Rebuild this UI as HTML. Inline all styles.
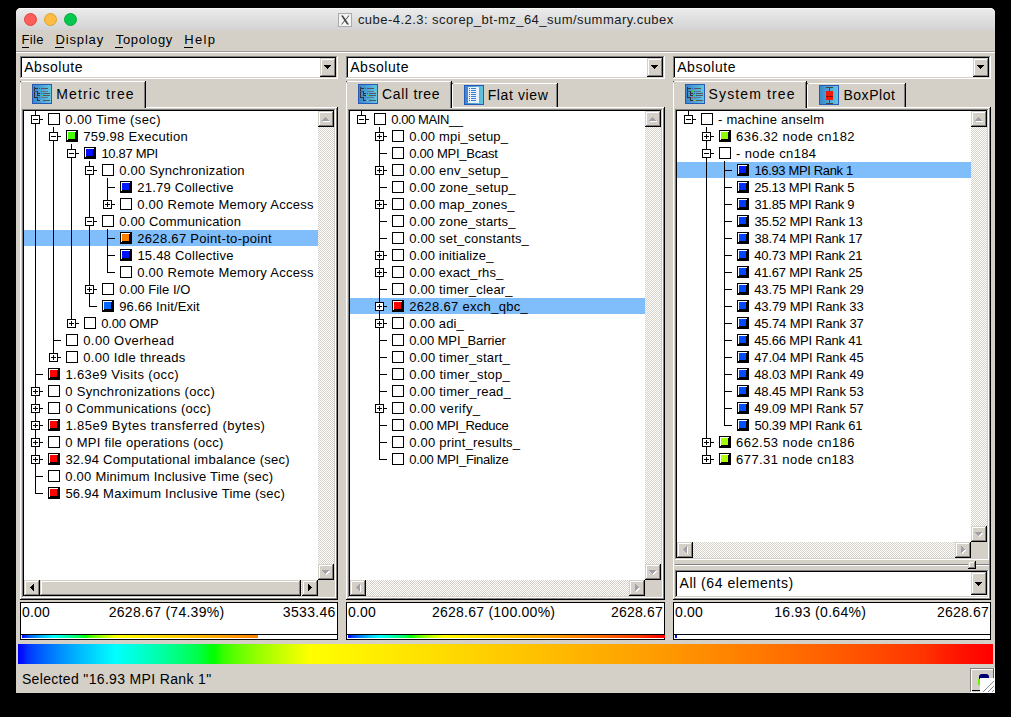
<!DOCTYPE html>
<html><head><meta charset="utf-8"><style>
html,body{margin:0;padding:0;}
body{width:1011px;height:717px;overflow:hidden;background:#000;position:relative;font-family:"Liberation Sans",sans-serif;}
body div{position:absolute;}
.t{white-space:pre;}
#win{left:16px;top:8px;width:979px;height:685px;background:#d4d0c8;border-radius:5px 5px 0 0;}
#title{left:16px;top:8px;width:979px;height:22px;border-radius:5px 5px 0 0;background:linear-gradient(#ececec,#d3d3d3);box-shadow:inset 0 1px 0 #f8f8f8;}
</style></head><body>
<div id="win"></div>
<div id="title"></div>
<div style="left:24px;top:13px;width:11px;height:11px;border-radius:50%;background:#fd5e5a;border:0.5px solid #e5413c;"></div>
<div style="left:44px;top:13px;width:11px;height:11px;border-radius:50%;background:#fdbc43;border:0.5px solid #e2a02b;"></div>
<div style="left:64px;top:13px;width:11px;height:11px;border-radius:50%;background:#05c94e;border:0.5px solid #06a93d;"></div>
<svg style="position:absolute;left:338px;top:13px" width="14" height="14" viewBox="0 0 14 14"><rect x="0.5" y="0.5" width="13" height="13" fill="#f4f4f4" stroke="#aaa"/><path d="M3 2.5 L5 2.5 L11 11.5 L9 11.5 Z" fill="#444"/><path d="M10.5 2.5 L11.5 2.5 L4 11.5 L3 11.5 Z" fill="#444"/></svg>
<div class="t" style="left:357.90px;top:13px;font-size:13px;line-height:13px;letter-spacing:0.456px;color:#1a1a1a;">cube-4.2.3: scorep_bt-mz_64_sum/summary.cubex</div>
<div class="t" style="left:21.60px;top:33px;font-size:13px;line-height:13px;letter-spacing:0.300px;color:#000;">File</div>
<div style="left:22px;top:47px;width:7px;height:1px;background:#000;"></div>
<div class="t" style="left:55.50px;top:33px;font-size:13px;line-height:13px;letter-spacing:0.846px;color:#000;">Display</div>
<div style="left:55px;top:47px;width:9px;height:1px;background:#000;"></div>
<div class="t" style="left:115.85px;top:33px;font-size:13px;line-height:13px;letter-spacing:0.621px;color:#000;">Topology</div>
<div style="left:115px;top:47px;width:8px;height:1px;background:#000;"></div>
<div class="t" style="left:184.30px;top:33px;font-size:13px;line-height:13px;letter-spacing:1.283px;color:#000;">Help</div>
<div style="left:184px;top:47px;width:9px;height:1px;background:#000;"></div>
<div style="left:16px;top:51px;width:979px;height:1px;background:#a09c94;"></div>
<div style="left:16px;top:52px;width:979px;height:1px;background:#fff;"></div>
<div style="left:20px;top:56px;width:318px;height:23px;background:#fff;"></div>
<div style="left:20px;top:56px;width:317px;height:22px;background:#808080;"></div>
<div style="left:21px;top:57px;width:316px;height:21px;background:#d4d0c8;"></div>
<div style="left:21px;top:57px;width:315px;height:20px;background:#000;"></div>
<div style="left:22px;top:58px;width:314px;height:19px;background:#fff;"></div>
<div style="left:320px;top:58px;width:16px;height:19px;background:#000;"></div>
<div style="left:320px;top:58px;width:15px;height:18px;background:#d4d0c8;"></div>
<div style="left:321px;top:59px;width:14px;height:17px;background:#808080;"></div>
<div style="left:321px;top:59px;width:13px;height:16px;background:#fff;"></div>
<div style="left:322px;top:60px;width:12px;height:15px;background:#d4d0c8;"></div>
<div style="left:324px;top:65px;width:7px;height:1px;background:#000;"></div>
<div style="left:325px;top:66px;width:5px;height:1px;background:#000;"></div>
<div style="left:326px;top:67px;width:3px;height:1px;background:#000;"></div>
<div style="left:327px;top:68px;width:1px;height:1px;background:#000;"></div>
<div class="t" style="left:24.20px;top:60px;font-size:14px;line-height:14px;letter-spacing:0.543px;color:#000;">Absolute</div>
<div style="left:20px;top:107px;width:318px;height:493px;background:#000;"></div>
<div style="left:20px;top:107px;width:317px;height:492px;background:#fff;"></div>
<div style="left:21px;top:108px;width:316px;height:491px;background:#808080;"></div>
<div style="left:21px;top:108px;width:315px;height:490px;background:#d4d0c8;"></div>
<div style="left:20px;top:81px;width:126px;height:27px;background:#000;"></div>
<div style="left:20px;top:81px;width:125px;height:27px;background:#fff;border-top-left-radius:2px;"></div>
<div style="left:21px;top:82px;width:124px;height:26px;background:#808080;"></div>
<div style="left:21px;top:82px;width:123px;height:26px;background:#d4d0c8;"></div>
<svg style="position:absolute;left:32px;top:84px" width="20" height="20" viewBox="0 0 20 20" shape-rendering="crispEdges">
<defs><linearGradient id="ig32" x1="0" x2="1" y1="0" y2="0"><stop offset="0" stop-color="#3a86cc"/><stop offset="1" stop-color="#62c6de"/></linearGradient></defs>
<rect x="0" y="0" width="20" height="20" fill="#2a58b8"/><rect x="1" y="1" width="18" height="18" fill="url(#ig32)"/>
<rect x="2" y="3" width="1" height="11" fill="#333"/><rect x="2" y="4" width="4" height="1" fill="#333"/>
<rect x="2" y="7" width="4" height="1" fill="#3a5a78"/><rect x="5" y="7" width="1" height="5" fill="#333"/>
<rect x="5" y="9" width="3" height="1" fill="#333"/><rect x="5" y="11" width="3" height="1" fill="#333"/>
<rect x="2" y="13" width="4" height="1" fill="#333"/><rect x="5" y="13" width="1" height="4" fill="#333"/><rect x="5" y="16" width="3" height="1" fill="#333"/>
<rect x="7" y="4" width="1" height="1" fill="#3050e0"/><rect x="7" y="6" width="1" height="2" fill="#30d040"/>
<rect x="9" y="9" width="1" height="1" fill="#3050e0"/><rect x="9" y="11" width="2" height="1" fill="#20e030"/>
<rect x="7" y="13" width="1" height="1" fill="#c03040"/><rect x="9" y="16" width="1" height="1" fill="#d0c040"/>
<rect x="9" y="4" width="7" height="1" fill="#556"/><rect x="9" y="7" width="7" height="1" fill="#5a7a90"/>
<rect x="11" y="9" width="7" height="1" fill="#556"/><rect x="11" y="11" width="7" height="1" fill="#556"/>
<rect x="9" y="13" width="7" height="1" fill="#5a7a90"/><rect x="11" y="16" width="7" height="1" fill="#556"/>
</svg>
<div class="t" style="left:56.27px;top:87px;font-size:14px;line-height:14px;letter-spacing:1.120px;color:#000;">Metric tree</div>
<div style="left:22px;top:109px;width:314px;height:489px;background:#fff;"></div>
<div style="left:22px;top:109px;width:313px;height:488px;background:#808080;"></div>
<div style="left:23px;top:110px;width:312px;height:487px;background:#d4d0c8;"></div>
<div style="left:23px;top:110px;width:311px;height:486px;background:#000;"></div>
<div style="left:24px;top:111px;width:310px;height:485px;background:#fff;"></div>
<div style="left:318px;top:111px;width:16px;height:469px;background:#fff;background-image:repeating-conic-gradient(#d4d0c8 0 25%,#fff 0 50%);background-size:2px 2px;"></div>
<div style="left:318px;top:111px;width:16px;height:16px;background:#000;"></div>
<div style="left:318px;top:111px;width:15px;height:15px;background:#d4d0c8;"></div>
<div style="left:319px;top:112px;width:14px;height:14px;background:#808080;"></div>
<div style="left:319px;top:112px;width:13px;height:13px;background:#fff;"></div>
<div style="left:320px;top:113px;width:12px;height:12px;background:#d4d0c8;"></div>
<div style="left:318px;top:564px;width:16px;height:16px;background:#000;"></div>
<div style="left:318px;top:564px;width:15px;height:15px;background:#d4d0c8;"></div>
<div style="left:319px;top:565px;width:14px;height:14px;background:#808080;"></div>
<div style="left:319px;top:565px;width:13px;height:13px;background:#fff;"></div>
<div style="left:320px;top:566px;width:12px;height:12px;background:#d4d0c8;"></div>
<div style="left:326px;top:118px;width:1px;height:1px;background:#fff;"></div>
<div style="left:325px;top:119px;width:3px;height:1px;background:#fff;"></div>
<div style="left:324px;top:120px;width:5px;height:1px;background:#fff;"></div>
<div style="left:323px;top:121px;width:7px;height:1px;background:#fff;"></div>
<div style="left:325px;top:117px;width:1px;height:1px;background:#a0a0a8;"></div>
<div style="left:324px;top:118px;width:3px;height:1px;background:#a0a0a8;"></div>
<div style="left:323px;top:119px;width:5px;height:1px;background:#a0a0a8;"></div>
<div style="left:322px;top:120px;width:7px;height:1px;background:#a0a0a8;"></div>
<div style="left:323px;top:571px;width:7px;height:1px;background:#fff;"></div>
<div style="left:324px;top:572px;width:5px;height:1px;background:#fff;"></div>
<div style="left:325px;top:573px;width:3px;height:1px;background:#fff;"></div>
<div style="left:326px;top:574px;width:1px;height:1px;background:#fff;"></div>
<div style="left:322px;top:570px;width:7px;height:1px;background:#a0a0a8;"></div>
<div style="left:323px;top:571px;width:5px;height:1px;background:#a0a0a8;"></div>
<div style="left:324px;top:572px;width:3px;height:1px;background:#a0a0a8;"></div>
<div style="left:325px;top:573px;width:1px;height:1px;background:#a0a0a8;"></div>
<div style="left:318px;top:580px;width:16px;height:16px;background:#d4d0c8;"></div>
<div style="left:24px;top:580px;width:294px;height:16px;background:#fff;background-image:repeating-conic-gradient(#d4d0c8 0 25%,#fff 0 50%);background-size:2px 2px;"></div>
<div style="left:24px;top:580px;width:16px;height:16px;background:#000;"></div>
<div style="left:24px;top:580px;width:15px;height:15px;background:#d4d0c8;"></div>
<div style="left:25px;top:581px;width:14px;height:14px;background:#808080;"></div>
<div style="left:25px;top:581px;width:13px;height:13px;background:#fff;"></div>
<div style="left:26px;top:582px;width:12px;height:12px;background:#d4d0c8;"></div>
<div style="left:302px;top:580px;width:16px;height:16px;background:#000;"></div>
<div style="left:302px;top:580px;width:15px;height:15px;background:#d4d0c8;"></div>
<div style="left:303px;top:581px;width:14px;height:14px;background:#808080;"></div>
<div style="left:303px;top:581px;width:13px;height:13px;background:#fff;"></div>
<div style="left:304px;top:582px;width:12px;height:12px;background:#d4d0c8;"></div>
<div style="left:30px;top:587px;width:1px;height:1px;background:#000;"></div>
<div style="left:31px;top:586px;width:1px;height:3px;background:#000;"></div>
<div style="left:32px;top:585px;width:1px;height:5px;background:#000;"></div>
<div style="left:33px;top:584px;width:1px;height:7px;background:#000;"></div>
<div style="left:308px;top:584px;width:1px;height:7px;background:#000;"></div>
<div style="left:309px;top:585px;width:1px;height:5px;background:#000;"></div>
<div style="left:310px;top:586px;width:1px;height:3px;background:#000;"></div>
<div style="left:311px;top:587px;width:1px;height:1px;background:#000;"></div>
<div style="left:40px;top:580px;width:261px;height:16px;background:#000;"></div>
<div style="left:40px;top:580px;width:260px;height:15px;background:#d4d0c8;"></div>
<div style="left:41px;top:581px;width:259px;height:14px;background:#808080;"></div>
<div style="left:41px;top:581px;width:258px;height:13px;background:#fff;"></div>
<div style="left:42px;top:582px;width:257px;height:12px;background:#d4d0c8;"></div>
<div style="left:35px;top:110px;width:1px;height:10px;background:#000;"></div>
<div style="left:35px;top:119px;width:1px;height:9px;background:#000;"></div>
<div style="left:35px;top:119px;width:8px;height:1px;background:#000;"></div>
<div style="left:31px;top:115px;width:9px;height:9px;background:#000;"></div>
<div style="left:32px;top:116px;width:7px;height:7px;background:#fff;"></div>
<div style="left:33px;top:119px;width:5px;height:1px;background:#000;"></div>
<div style="left:48px;top:113px;width:12px;height:12px;background:#000;"></div>
<div style="left:49px;top:114px;width:10px;height:10px;background:#fff;"></div>
<div class="t" style="left:65.25px;top:113px;font-size:13px;line-height:13px;letter-spacing:0.413px;color:#000;">0.00 Time (sec)</div>
<div style="left:35px;top:128px;width:1px;height:17px;background:#000;"></div>
<div style="left:53px;top:127px;width:1px;height:10px;background:#000;"></div>
<div style="left:53px;top:136px;width:1px;height:9px;background:#000;"></div>
<div style="left:53px;top:136px;width:8px;height:1px;background:#000;"></div>
<div style="left:49px;top:132px;width:9px;height:9px;background:#000;"></div>
<div style="left:50px;top:133px;width:7px;height:7px;background:#fff;"></div>
<div style="left:51px;top:136px;width:5px;height:1px;background:#000;"></div>
<div style="left:66px;top:130px;width:12px;height:12px;background:#000;"></div>
<div style="left:67px;top:131px;width:9px;height:1px;background:#fff;"></div>
<div style="left:67px;top:131px;width:1px;height:9px;background:#fff;"></div>
<div style="left:68px;top:132px;width:7px;height:7px;background:#44ff00;"></div>
<div class="t" style="left:83.25px;top:130px;font-size:13px;line-height:13px;letter-spacing:0.267px;color:#000;">759.98 Execution</div>
<div style="left:35px;top:145px;width:1px;height:17px;background:#000;"></div>
<div style="left:53px;top:145px;width:1px;height:17px;background:#000;"></div>
<div style="left:71px;top:144px;width:1px;height:10px;background:#000;"></div>
<div style="left:71px;top:153px;width:1px;height:9px;background:#000;"></div>
<div style="left:71px;top:153px;width:8px;height:1px;background:#000;"></div>
<div style="left:67px;top:149px;width:9px;height:9px;background:#000;"></div>
<div style="left:68px;top:150px;width:7px;height:7px;background:#fff;"></div>
<div style="left:69px;top:153px;width:5px;height:1px;background:#000;"></div>
<div style="left:84px;top:147px;width:12px;height:12px;background:#000;"></div>
<div style="left:85px;top:148px;width:9px;height:1px;background:#fff;"></div>
<div style="left:85px;top:148px;width:1px;height:9px;background:#fff;"></div>
<div style="left:86px;top:149px;width:7px;height:7px;background:#000bff;"></div>
<div class="t" style="left:101.38px;top:147px;font-size:13px;line-height:13px;letter-spacing:-0.300px;color:#000;">10.87 MPI</div>
<div style="left:35px;top:162px;width:1px;height:17px;background:#000;"></div>
<div style="left:53px;top:162px;width:1px;height:17px;background:#000;"></div>
<div style="left:71px;top:162px;width:1px;height:17px;background:#000;"></div>
<div style="left:89px;top:161px;width:1px;height:10px;background:#000;"></div>
<div style="left:89px;top:170px;width:1px;height:9px;background:#000;"></div>
<div style="left:89px;top:170px;width:8px;height:1px;background:#000;"></div>
<div style="left:85px;top:166px;width:9px;height:9px;background:#000;"></div>
<div style="left:86px;top:167px;width:7px;height:7px;background:#fff;"></div>
<div style="left:87px;top:170px;width:5px;height:1px;background:#000;"></div>
<div style="left:102px;top:164px;width:12px;height:12px;background:#000;"></div>
<div style="left:103px;top:165px;width:10px;height:10px;background:#fff;"></div>
<div class="t" style="left:119.25px;top:164px;font-size:13px;line-height:13px;letter-spacing:0.205px;color:#000;">0.00 Synchronization</div>
<div style="left:35px;top:179px;width:1px;height:17px;background:#000;"></div>
<div style="left:53px;top:179px;width:1px;height:17px;background:#000;"></div>
<div style="left:71px;top:179px;width:1px;height:17px;background:#000;"></div>
<div style="left:89px;top:179px;width:1px;height:17px;background:#000;"></div>
<div style="left:107px;top:178px;width:1px;height:10px;background:#000;"></div>
<div style="left:107px;top:187px;width:1px;height:9px;background:#000;"></div>
<div style="left:107px;top:187px;width:8px;height:1px;background:#000;"></div>
<div style="left:120px;top:181px;width:12px;height:12px;background:#000;"></div>
<div style="left:121px;top:182px;width:9px;height:1px;background:#fff;"></div>
<div style="left:121px;top:182px;width:1px;height:9px;background:#fff;"></div>
<div style="left:122px;top:183px;width:7px;height:7px;background:#001bff;"></div>
<div class="t" style="left:137.25px;top:181px;font-size:13px;line-height:13px;letter-spacing:0.243px;color:#000;">21.79 Collective</div>
<div style="left:35px;top:196px;width:1px;height:17px;background:#000;"></div>
<div style="left:53px;top:196px;width:1px;height:17px;background:#000;"></div>
<div style="left:71px;top:196px;width:1px;height:17px;background:#000;"></div>
<div style="left:89px;top:196px;width:1px;height:17px;background:#000;"></div>
<div style="left:107px;top:195px;width:1px;height:10px;background:#000;"></div>
<div style="left:107px;top:204px;width:8px;height:1px;background:#000;"></div>
<div style="left:103px;top:200px;width:9px;height:9px;background:#000;"></div>
<div style="left:104px;top:201px;width:7px;height:7px;background:#fff;"></div>
<div style="left:105px;top:204px;width:5px;height:1px;background:#000;"></div>
<div style="left:107px;top:202px;width:1px;height:5px;background:#000;"></div>
<div style="left:120px;top:198px;width:12px;height:12px;background:#000;"></div>
<div style="left:121px;top:199px;width:10px;height:10px;background:#fff;"></div>
<div class="t" style="left:137.25px;top:198px;font-size:13px;line-height:13px;letter-spacing:0.266px;color:#000;">0.00 Remote Memory Access</div>
<div style="left:35px;top:213px;width:1px;height:17px;background:#000;"></div>
<div style="left:53px;top:213px;width:1px;height:17px;background:#000;"></div>
<div style="left:71px;top:213px;width:1px;height:17px;background:#000;"></div>
<div style="left:89px;top:212px;width:1px;height:10px;background:#000;"></div>
<div style="left:89px;top:221px;width:1px;height:9px;background:#000;"></div>
<div style="left:89px;top:221px;width:8px;height:1px;background:#000;"></div>
<div style="left:85px;top:217px;width:9px;height:9px;background:#000;"></div>
<div style="left:86px;top:218px;width:7px;height:7px;background:#fff;"></div>
<div style="left:87px;top:221px;width:5px;height:1px;background:#000;"></div>
<div style="left:102px;top:215px;width:12px;height:12px;background:#000;"></div>
<div style="left:103px;top:216px;width:10px;height:10px;background:#fff;"></div>
<div class="t" style="left:119.25px;top:215px;font-size:13px;line-height:13px;letter-spacing:0.144px;color:#000;">0.00 Communication</div>
<div style="left:24px;top:230px;width:294px;height:16px;background:#80bdfb;"></div>
<div style="left:35px;top:230px;width:1px;height:17px;background:#000;"></div>
<div style="left:53px;top:230px;width:1px;height:17px;background:#000;"></div>
<div style="left:71px;top:230px;width:1px;height:17px;background:#000;"></div>
<div style="left:89px;top:230px;width:1px;height:17px;background:#000;"></div>
<div style="left:107px;top:229px;width:1px;height:10px;background:#000;"></div>
<div style="left:107px;top:238px;width:1px;height:9px;background:#000;"></div>
<div style="left:107px;top:238px;width:8px;height:1px;background:#000;"></div>
<div style="left:120px;top:232px;width:12px;height:12px;background:#000;"></div>
<div style="left:121px;top:233px;width:9px;height:1px;background:#fff;"></div>
<div style="left:121px;top:233px;width:1px;height:9px;background:#fff;"></div>
<div style="left:122px;top:234px;width:7px;height:7px;background:#ff7e00;"></div>
<div class="t" style="left:137.25px;top:232px;font-size:13px;line-height:13px;letter-spacing:0.312px;color:#000;">2628.67 Point-to-point</div>
<div style="left:35px;top:247px;width:1px;height:17px;background:#000;"></div>
<div style="left:53px;top:247px;width:1px;height:17px;background:#000;"></div>
<div style="left:71px;top:247px;width:1px;height:17px;background:#000;"></div>
<div style="left:89px;top:247px;width:1px;height:17px;background:#000;"></div>
<div style="left:107px;top:246px;width:1px;height:10px;background:#000;"></div>
<div style="left:107px;top:255px;width:1px;height:9px;background:#000;"></div>
<div style="left:107px;top:255px;width:8px;height:1px;background:#000;"></div>
<div style="left:120px;top:249px;width:12px;height:12px;background:#000;"></div>
<div style="left:121px;top:250px;width:9px;height:1px;background:#fff;"></div>
<div style="left:121px;top:250px;width:1px;height:9px;background:#fff;"></div>
<div style="left:122px;top:251px;width:7px;height:7px;background:#0011ff;"></div>
<div class="t" style="left:137.38px;top:249px;font-size:13px;line-height:13px;letter-spacing:0.235px;color:#000;">15.48 Collective</div>
<div style="left:35px;top:264px;width:1px;height:17px;background:#000;"></div>
<div style="left:53px;top:264px;width:1px;height:17px;background:#000;"></div>
<div style="left:71px;top:264px;width:1px;height:17px;background:#000;"></div>
<div style="left:89px;top:264px;width:1px;height:17px;background:#000;"></div>
<div style="left:107px;top:263px;width:1px;height:10px;background:#000;"></div>
<div style="left:107px;top:272px;width:8px;height:1px;background:#000;"></div>
<div style="left:120px;top:266px;width:12px;height:12px;background:#000;"></div>
<div style="left:121px;top:267px;width:10px;height:10px;background:#fff;"></div>
<div class="t" style="left:137.25px;top:266px;font-size:13px;line-height:13px;letter-spacing:0.266px;color:#000;">0.00 Remote Memory Access</div>
<div style="left:35px;top:281px;width:1px;height:17px;background:#000;"></div>
<div style="left:53px;top:281px;width:1px;height:17px;background:#000;"></div>
<div style="left:71px;top:281px;width:1px;height:17px;background:#000;"></div>
<div style="left:89px;top:280px;width:1px;height:10px;background:#000;"></div>
<div style="left:89px;top:289px;width:1px;height:9px;background:#000;"></div>
<div style="left:89px;top:289px;width:8px;height:1px;background:#000;"></div>
<div style="left:85px;top:285px;width:9px;height:9px;background:#000;"></div>
<div style="left:86px;top:286px;width:7px;height:7px;background:#fff;"></div>
<div style="left:87px;top:289px;width:5px;height:1px;background:#000;"></div>
<div style="left:89px;top:287px;width:1px;height:5px;background:#000;"></div>
<div style="left:102px;top:283px;width:12px;height:12px;background:#000;"></div>
<div style="left:103px;top:284px;width:10px;height:10px;background:#fff;"></div>
<div class="t" style="left:119.25px;top:283px;font-size:13px;line-height:13px;letter-spacing:0.017px;color:#000;">0.00 File I/O</div>
<div style="left:35px;top:298px;width:1px;height:17px;background:#000;"></div>
<div style="left:53px;top:298px;width:1px;height:17px;background:#000;"></div>
<div style="left:71px;top:298px;width:1px;height:17px;background:#000;"></div>
<div style="left:89px;top:297px;width:1px;height:10px;background:#000;"></div>
<div style="left:89px;top:306px;width:8px;height:1px;background:#000;"></div>
<div style="left:102px;top:300px;width:12px;height:12px;background:#000;"></div>
<div style="left:103px;top:301px;width:9px;height:1px;background:#fff;"></div>
<div style="left:103px;top:301px;width:1px;height:9px;background:#fff;"></div>
<div style="left:104px;top:302px;width:7px;height:7px;background:#0067ff;"></div>
<div class="t" style="left:119.25px;top:300px;font-size:13px;line-height:13px;letter-spacing:0.121px;color:#000;">96.66 Init/Exit</div>
<div style="left:35px;top:315px;width:1px;height:17px;background:#000;"></div>
<div style="left:53px;top:315px;width:1px;height:17px;background:#000;"></div>
<div style="left:71px;top:314px;width:1px;height:10px;background:#000;"></div>
<div style="left:71px;top:323px;width:8px;height:1px;background:#000;"></div>
<div style="left:67px;top:319px;width:9px;height:9px;background:#000;"></div>
<div style="left:68px;top:320px;width:7px;height:7px;background:#fff;"></div>
<div style="left:69px;top:323px;width:5px;height:1px;background:#000;"></div>
<div style="left:71px;top:321px;width:1px;height:5px;background:#000;"></div>
<div style="left:84px;top:317px;width:12px;height:12px;background:#000;"></div>
<div style="left:85px;top:318px;width:10px;height:10px;background:#fff;"></div>
<div class="t" style="left:101.25px;top:317px;font-size:13px;line-height:13px;letter-spacing:-0.161px;color:#000;">0.00 OMP</div>
<div style="left:35px;top:332px;width:1px;height:17px;background:#000;"></div>
<div style="left:53px;top:331px;width:1px;height:10px;background:#000;"></div>
<div style="left:53px;top:340px;width:1px;height:9px;background:#000;"></div>
<div style="left:53px;top:340px;width:8px;height:1px;background:#000;"></div>
<div style="left:66px;top:334px;width:12px;height:12px;background:#000;"></div>
<div style="left:67px;top:335px;width:10px;height:10px;background:#fff;"></div>
<div class="t" style="left:83.25px;top:334px;font-size:13px;line-height:13px;letter-spacing:0.392px;color:#000;">0.00 Overhead</div>
<div style="left:35px;top:349px;width:1px;height:17px;background:#000;"></div>
<div style="left:53px;top:348px;width:1px;height:10px;background:#000;"></div>
<div style="left:53px;top:357px;width:8px;height:1px;background:#000;"></div>
<div style="left:49px;top:353px;width:9px;height:9px;background:#000;"></div>
<div style="left:50px;top:354px;width:7px;height:7px;background:#fff;"></div>
<div style="left:51px;top:357px;width:5px;height:1px;background:#000;"></div>
<div style="left:53px;top:355px;width:1px;height:5px;background:#000;"></div>
<div style="left:66px;top:351px;width:12px;height:12px;background:#000;"></div>
<div style="left:67px;top:352px;width:10px;height:10px;background:#fff;"></div>
<div class="t" style="left:83.25px;top:351px;font-size:13px;line-height:13px;letter-spacing:0.328px;color:#000;">0.00 Idle threads</div>
<div style="left:35px;top:365px;width:1px;height:10px;background:#000;"></div>
<div style="left:35px;top:374px;width:1px;height:9px;background:#000;"></div>
<div style="left:35px;top:374px;width:8px;height:1px;background:#000;"></div>
<div style="left:48px;top:368px;width:12px;height:12px;background:#000;"></div>
<div style="left:49px;top:369px;width:9px;height:1px;background:#fff;"></div>
<div style="left:49px;top:369px;width:1px;height:9px;background:#fff;"></div>
<div style="left:50px;top:370px;width:7px;height:7px;background:#ff0000;"></div>
<div class="t" style="left:65.38px;top:368px;font-size:13px;line-height:13px;letter-spacing:0.363px;color:#000;">1.63e9 Visits (occ)</div>
<div style="left:35px;top:382px;width:1px;height:10px;background:#000;"></div>
<div style="left:35px;top:391px;width:1px;height:9px;background:#000;"></div>
<div style="left:35px;top:391px;width:8px;height:1px;background:#000;"></div>
<div style="left:31px;top:387px;width:9px;height:9px;background:#000;"></div>
<div style="left:32px;top:388px;width:7px;height:7px;background:#fff;"></div>
<div style="left:33px;top:391px;width:5px;height:1px;background:#000;"></div>
<div style="left:35px;top:389px;width:1px;height:5px;background:#000;"></div>
<div style="left:48px;top:385px;width:12px;height:12px;background:#000;"></div>
<div style="left:49px;top:386px;width:10px;height:10px;background:#fff;"></div>
<div class="t" style="left:65.25px;top:385px;font-size:13px;line-height:13px;letter-spacing:0.310px;color:#000;">0 Synchronizations (occ)</div>
<div style="left:35px;top:399px;width:1px;height:10px;background:#000;"></div>
<div style="left:35px;top:408px;width:1px;height:9px;background:#000;"></div>
<div style="left:35px;top:408px;width:8px;height:1px;background:#000;"></div>
<div style="left:31px;top:404px;width:9px;height:9px;background:#000;"></div>
<div style="left:32px;top:405px;width:7px;height:7px;background:#fff;"></div>
<div style="left:33px;top:408px;width:5px;height:1px;background:#000;"></div>
<div style="left:35px;top:406px;width:1px;height:5px;background:#000;"></div>
<div style="left:48px;top:402px;width:12px;height:12px;background:#000;"></div>
<div style="left:49px;top:403px;width:10px;height:10px;background:#fff;"></div>
<div class="t" style="left:65.25px;top:402px;font-size:13px;line-height:13px;letter-spacing:0.260px;color:#000;">0 Communications (occ)</div>
<div style="left:35px;top:416px;width:1px;height:10px;background:#000;"></div>
<div style="left:35px;top:425px;width:1px;height:9px;background:#000;"></div>
<div style="left:35px;top:425px;width:8px;height:1px;background:#000;"></div>
<div style="left:31px;top:421px;width:9px;height:9px;background:#000;"></div>
<div style="left:32px;top:422px;width:7px;height:7px;background:#fff;"></div>
<div style="left:33px;top:425px;width:5px;height:1px;background:#000;"></div>
<div style="left:35px;top:423px;width:1px;height:5px;background:#000;"></div>
<div style="left:48px;top:419px;width:12px;height:12px;background:#000;"></div>
<div style="left:49px;top:420px;width:9px;height:1px;background:#fff;"></div>
<div style="left:49px;top:420px;width:1px;height:9px;background:#fff;"></div>
<div style="left:50px;top:421px;width:7px;height:7px;background:#ff0000;"></div>
<div class="t" style="left:65.38px;top:419px;font-size:13px;line-height:13px;letter-spacing:0.446px;color:#000;">1.85e9 Bytes transferred (bytes)</div>
<div style="left:35px;top:433px;width:1px;height:10px;background:#000;"></div>
<div style="left:35px;top:442px;width:1px;height:9px;background:#000;"></div>
<div style="left:35px;top:442px;width:8px;height:1px;background:#000;"></div>
<div style="left:31px;top:438px;width:9px;height:9px;background:#000;"></div>
<div style="left:32px;top:439px;width:7px;height:7px;background:#fff;"></div>
<div style="left:33px;top:442px;width:5px;height:1px;background:#000;"></div>
<div style="left:35px;top:440px;width:1px;height:5px;background:#000;"></div>
<div style="left:48px;top:436px;width:12px;height:12px;background:#000;"></div>
<div style="left:49px;top:437px;width:10px;height:10px;background:#fff;"></div>
<div class="t" style="left:65.25px;top:436px;font-size:13px;line-height:13px;letter-spacing:0.269px;color:#000;">0 MPI file operations (occ)</div>
<div style="left:35px;top:450px;width:1px;height:10px;background:#000;"></div>
<div style="left:35px;top:459px;width:1px;height:9px;background:#000;"></div>
<div style="left:35px;top:459px;width:8px;height:1px;background:#000;"></div>
<div style="left:31px;top:455px;width:9px;height:9px;background:#000;"></div>
<div style="left:32px;top:456px;width:7px;height:7px;background:#fff;"></div>
<div style="left:33px;top:459px;width:5px;height:1px;background:#000;"></div>
<div style="left:35px;top:457px;width:1px;height:5px;background:#000;"></div>
<div style="left:48px;top:453px;width:12px;height:12px;background:#000;"></div>
<div style="left:49px;top:454px;width:9px;height:1px;background:#fff;"></div>
<div style="left:49px;top:454px;width:1px;height:9px;background:#fff;"></div>
<div style="left:50px;top:455px;width:7px;height:7px;background:#ff0000;"></div>
<div class="t" style="left:65.38px;top:453px;font-size:13px;line-height:13px;letter-spacing:0.262px;color:#000;">32.94 Computational imbalance (sec)</div>
<div style="left:35px;top:467px;width:1px;height:10px;background:#000;"></div>
<div style="left:35px;top:476px;width:1px;height:9px;background:#000;"></div>
<div style="left:35px;top:476px;width:8px;height:1px;background:#000;"></div>
<div style="left:48px;top:470px;width:12px;height:12px;background:#000;"></div>
<div style="left:49px;top:471px;width:10px;height:10px;background:#fff;"></div>
<div class="t" style="left:65.25px;top:470px;font-size:13px;line-height:13px;letter-spacing:0.243px;color:#000;">0.00 Minimum Inclusive Time (sec)</div>
<div style="left:35px;top:484px;width:1px;height:10px;background:#000;"></div>
<div style="left:35px;top:493px;width:8px;height:1px;background:#000;"></div>
<div style="left:48px;top:487px;width:12px;height:12px;background:#000;"></div>
<div style="left:49px;top:488px;width:9px;height:1px;background:#fff;"></div>
<div style="left:49px;top:488px;width:1px;height:9px;background:#fff;"></div>
<div style="left:50px;top:489px;width:7px;height:7px;background:#ff0000;"></div>
<div class="t" style="left:65.38px;top:487px;font-size:13px;line-height:13px;letter-spacing:0.260px;color:#000;">56.94 Maximum Inclusive Time (sec)</div>
<div style="left:20px;top:602px;width:318px;height:38px;background:#000;"></div>
<div style="left:21px;top:603px;width:316px;height:36px;background:#fff;"></div>
<div style="left:21px;top:634px;width:316px;height:1px;background:#000;"></div>
<div style="left:22px;top:635px;width:236px;height:3px;background:#fff;background:linear-gradient(to right,#0000ff 0.00%,#0014ff 0.50%,#0033ff 1.00%,#0044ff 1.50%,#0053ff 2.00%,#0061ff 2.50%,#006eff 3.00%,#007aff 3.50%,#0086ff 4.00%,#0092ff 4.50%,#009dff 5.00%,#00a8ff 5.50%,#00b2ff 6.00%,#00bdff 6.50%,#00c7ff 7.00%,#00d0ff 7.50%,#00daff 8.00%,#00e4ff 8.50%,#00edff 9.00%,#00f6ff 9.50%,#00ffff 10.00%,#00fff6 10.50%,#00ffed 11.00%,#00ffe4 11.50%,#00ffda 12.00%,#00ffd0 12.50%,#00ffc7 13.00%,#00ffbd 13.50%,#00ffb2 14.00%,#00ffa8 14.50%,#00ff9d 15.00%,#00ff92 15.50%,#00ff86 16.00%,#00ff7a 16.50%,#00ff6e 17.00%,#00ff61 17.50%,#00ff53 18.00%,#00ff44 18.50%,#00ff33 19.00%,#00ff14 19.50%,#00ff00 20.00%,#14ff00 20.50%,#33ff00 21.00%,#44ff00 21.50%,#53ff00 22.00%,#61ff00 22.50%,#6eff00 23.00%,#7aff00 23.50%,#86ff00 24.00%,#92ff00 24.50%,#9dff00 25.00%,#a8ff00 25.50%,#b2ff00 26.00%,#bdff00 26.50%,#c7ff00 27.00%,#d0ff00 27.50%,#daff00 28.00%,#e4ff00 28.50%,#edff00 29.00%,#f6ff00 29.50%,#ffff00 30.00%,#fffc00 31.00%,#fffa00 32.00%,#fff700 33.00%,#fff500 34.00%,#fff200 35.00%,#ffef00 36.00%,#ffed00 37.00%,#ffea00 38.00%,#ffe800 39.00%,#ffe500 40.00%,#ffe200 41.00%,#ffe000 42.00%,#ffdd00 43.00%,#ffda00 44.00%,#ffd700 45.00%,#ffd500 46.00%,#ffd200 47.00%,#ffcf00 48.00%,#ffcc00 49.00%,#ffc900 50.00%,#ffc700 51.00%,#ffc400 52.00%,#ffc100 53.00%,#ffbe00 54.00%,#ffbb00 55.00%,#ffb800 56.00%,#ffb500 57.00%,#ffb200 58.00%,#ffaf00 59.00%,#ffac00 60.00%,#ffa900 61.00%,#ffa600 62.00%,#ffa300 63.00%,#ffa000 64.00%,#ff9d00 65.00%,#ff9a00 66.00%,#ff9700 67.00%,#ff9300 68.00%,#ff9000 69.00%,#ff8d00 70.00%,#ff8a00 71.00%,#ff8600 72.00%,#ff8300 73.00%,#ff7f00 74.00%,#ff7c00 75.00%,#ff7900 76.00%,#ff7500 77.00%,#ff7100 78.00%,#ff6e00 79.00%,#ff6a00 80.00%,#ff6600 81.00%,#ff6300 82.00%,#ff5f00 83.00%,#ff5b00 84.00%,#ff5700 85.00%,#ff5300 86.00%,#ff4e00 87.00%,#ff4a00 88.00%,#ff4600 89.00%,#ff4100 90.00%,#ff3d00 91.00%,#ff3800 92.00%,#ff3300 93.00%,#ff2900 94.00%,#ff2000 95.00%,#ff1800 96.00%,#ff1100 97.00%,#ff0a00 98.00%,#ff0500 99.00%,#ff0000 100.00%);background-size:317px 3px;"></div>
<div class="t" style="left:22.00px;top:605px;font-size:14px;line-height:14px;letter-spacing:0.150px;color:#000;">0.00</div>
<div class="t" style="left:108.78px;top:605px;font-size:14px;line-height:14px;letter-spacing:0.268px;color:#000;">2628.67 (74.39%)</div>
<div class="t" style="left:282.80px;top:605px;font-size:14px;line-height:14px;letter-spacing:0.329px;color:#000;">3533.46</div>
<div style="left:346px;top:56px;width:319px;height:23px;background:#fff;"></div>
<div style="left:346px;top:56px;width:318px;height:22px;background:#808080;"></div>
<div style="left:347px;top:57px;width:317px;height:21px;background:#d4d0c8;"></div>
<div style="left:347px;top:57px;width:316px;height:20px;background:#000;"></div>
<div style="left:348px;top:58px;width:315px;height:19px;background:#fff;"></div>
<div style="left:647px;top:58px;width:16px;height:19px;background:#000;"></div>
<div style="left:647px;top:58px;width:15px;height:18px;background:#d4d0c8;"></div>
<div style="left:648px;top:59px;width:14px;height:17px;background:#808080;"></div>
<div style="left:648px;top:59px;width:13px;height:16px;background:#fff;"></div>
<div style="left:649px;top:60px;width:12px;height:15px;background:#d4d0c8;"></div>
<div style="left:651px;top:65px;width:7px;height:1px;background:#000;"></div>
<div style="left:652px;top:66px;width:5px;height:1px;background:#000;"></div>
<div style="left:653px;top:67px;width:3px;height:1px;background:#000;"></div>
<div style="left:654px;top:68px;width:1px;height:1px;background:#000;"></div>
<div class="t" style="left:350.20px;top:60px;font-size:14px;line-height:14px;letter-spacing:0.543px;color:#000;">Absolute</div>
<div style="left:346px;top:107px;width:319px;height:493px;background:#000;"></div>
<div style="left:346px;top:107px;width:318px;height:492px;background:#fff;"></div>
<div style="left:347px;top:108px;width:317px;height:491px;background:#808080;"></div>
<div style="left:347px;top:108px;width:316px;height:490px;background:#d4d0c8;"></div>
<div style="left:346px;top:81px;width:106px;height:27px;background:#000;"></div>
<div style="left:346px;top:81px;width:105px;height:27px;background:#fff;border-top-left-radius:2px;"></div>
<div style="left:347px;top:82px;width:104px;height:26px;background:#808080;"></div>
<div style="left:347px;top:82px;width:103px;height:26px;background:#d4d0c8;"></div>
<svg style="position:absolute;left:358px;top:84px" width="20" height="20" viewBox="0 0 20 20" shape-rendering="crispEdges">
<defs><linearGradient id="ig358" x1="0" x2="1" y1="0" y2="0"><stop offset="0" stop-color="#3a86cc"/><stop offset="1" stop-color="#62c6de"/></linearGradient></defs>
<rect x="0" y="0" width="20" height="20" fill="#2a58b8"/><rect x="1" y="1" width="18" height="18" fill="url(#ig358)"/>
<rect x="2" y="3" width="1" height="11" fill="#333"/><rect x="2" y="4" width="4" height="1" fill="#333"/>
<rect x="2" y="7" width="4" height="1" fill="#3a5a78"/><rect x="5" y="7" width="1" height="5" fill="#333"/>
<rect x="5" y="9" width="3" height="1" fill="#333"/><rect x="5" y="11" width="3" height="1" fill="#333"/>
<rect x="2" y="13" width="4" height="1" fill="#333"/><rect x="5" y="13" width="1" height="4" fill="#333"/><rect x="5" y="16" width="3" height="1" fill="#333"/>
<rect x="7" y="4" width="1" height="1" fill="#3050e0"/><rect x="7" y="6" width="1" height="2" fill="#30d040"/>
<rect x="9" y="9" width="1" height="1" fill="#3050e0"/><rect x="9" y="11" width="2" height="1" fill="#20e030"/>
<rect x="7" y="13" width="1" height="1" fill="#c03040"/><rect x="9" y="16" width="1" height="1" fill="#d0c040"/>
<rect x="9" y="4" width="7" height="1" fill="#556"/><rect x="9" y="7" width="7" height="1" fill="#5a7a90"/>
<rect x="11" y="9" width="7" height="1" fill="#556"/><rect x="11" y="11" width="7" height="1" fill="#556"/>
<rect x="9" y="13" width="7" height="1" fill="#5a7a90"/><rect x="11" y="16" width="7" height="1" fill="#556"/>
</svg>
<div class="t" style="left:382.07px;top:87px;font-size:14px;line-height:14px;letter-spacing:0.675px;color:#000;">Call tree</div>
<div style="left:452px;top:83px;width:106px;height:24px;background:#000;"></div>
<div style="left:452px;top:83px;width:105px;height:24px;background:#fff;border-top-left-radius:2px;"></div>
<div style="left:453px;top:84px;width:104px;height:23px;background:#808080;"></div>
<div style="left:453px;top:84px;width:103px;height:23px;background:#d4d0c8;"></div>
<svg style="position:absolute;left:464px;top:85px" width="20" height="20" viewBox="0 0 20 20" shape-rendering="crispEdges">
<defs><linearGradient id="if464" x1="0" x2="1" y1="0" y2="0"><stop offset="0" stop-color="#3a86cc"/><stop offset="1" stop-color="#62c6de"/></linearGradient></defs>
<rect x="0" y="0" width="20" height="20" fill="#2a58b8"/><rect x="1" y="1" width="18" height="18" fill="url(#if464)"/>
<rect x="4" y="2" width="11" height="16" fill="#e8f2fa"/><rect x="5" y="3" width="1" height="1" fill="#e03030"/><rect x="7" y="3" width="5" height="1" fill="#3a80d0"/><rect x="5" y="5" width="1" height="1" fill="#e03030"/><rect x="7" y="5" width="5" height="1" fill="#3a80d0"/><rect x="5" y="7" width="1" height="1" fill="#e03030"/><rect x="7" y="7" width="5" height="1" fill="#3a80d0"/><rect x="5" y="9" width="1" height="1" fill="#e03030"/><rect x="7" y="9" width="5" height="1" fill="#3a80d0"/><rect x="5" y="11" width="1" height="1" fill="#e03030"/><rect x="7" y="11" width="5" height="1" fill="#3a80d0"/><rect x="5" y="13" width="1" height="1" fill="#e03030"/><rect x="7" y="13" width="5" height="1" fill="#3a80d0"/><rect x="5" y="15" width="1" height="1" fill="#e03030"/><rect x="7" y="15" width="5" height="1" fill="#3a80d0"/>
</svg>
<div class="t" style="left:487.68px;top:88px;font-size:14px;line-height:14px;letter-spacing:0.619px;color:#000;">Flat view</div>
<div style="left:348px;top:109px;width:315px;height:489px;background:#fff;"></div>
<div style="left:348px;top:109px;width:314px;height:488px;background:#808080;"></div>
<div style="left:349px;top:110px;width:313px;height:487px;background:#d4d0c8;"></div>
<div style="left:349px;top:110px;width:312px;height:486px;background:#000;"></div>
<div style="left:350px;top:111px;width:311px;height:485px;background:#fff;"></div>
<div style="left:645px;top:111px;width:16px;height:469px;background:#fff;background-image:repeating-conic-gradient(#d4d0c8 0 25%,#fff 0 50%);background-size:2px 2px;"></div>
<div style="left:645px;top:111px;width:16px;height:16px;background:#000;"></div>
<div style="left:645px;top:111px;width:15px;height:15px;background:#d4d0c8;"></div>
<div style="left:646px;top:112px;width:14px;height:14px;background:#808080;"></div>
<div style="left:646px;top:112px;width:13px;height:13px;background:#fff;"></div>
<div style="left:647px;top:113px;width:12px;height:12px;background:#d4d0c8;"></div>
<div style="left:645px;top:564px;width:16px;height:16px;background:#000;"></div>
<div style="left:645px;top:564px;width:15px;height:15px;background:#d4d0c8;"></div>
<div style="left:646px;top:565px;width:14px;height:14px;background:#808080;"></div>
<div style="left:646px;top:565px;width:13px;height:13px;background:#fff;"></div>
<div style="left:647px;top:566px;width:12px;height:12px;background:#d4d0c8;"></div>
<div style="left:653px;top:118px;width:1px;height:1px;background:#fff;"></div>
<div style="left:652px;top:119px;width:3px;height:1px;background:#fff;"></div>
<div style="left:651px;top:120px;width:5px;height:1px;background:#fff;"></div>
<div style="left:650px;top:121px;width:7px;height:1px;background:#fff;"></div>
<div style="left:652px;top:117px;width:1px;height:1px;background:#a0a0a8;"></div>
<div style="left:651px;top:118px;width:3px;height:1px;background:#a0a0a8;"></div>
<div style="left:650px;top:119px;width:5px;height:1px;background:#a0a0a8;"></div>
<div style="left:649px;top:120px;width:7px;height:1px;background:#a0a0a8;"></div>
<div style="left:650px;top:571px;width:7px;height:1px;background:#fff;"></div>
<div style="left:651px;top:572px;width:5px;height:1px;background:#fff;"></div>
<div style="left:652px;top:573px;width:3px;height:1px;background:#fff;"></div>
<div style="left:653px;top:574px;width:1px;height:1px;background:#fff;"></div>
<div style="left:649px;top:570px;width:7px;height:1px;background:#a0a0a8;"></div>
<div style="left:650px;top:571px;width:5px;height:1px;background:#a0a0a8;"></div>
<div style="left:651px;top:572px;width:3px;height:1px;background:#a0a0a8;"></div>
<div style="left:652px;top:573px;width:1px;height:1px;background:#a0a0a8;"></div>
<div style="left:645px;top:580px;width:16px;height:16px;background:#d4d0c8;"></div>
<div style="left:350px;top:580px;width:295px;height:16px;background:#fff;background-image:repeating-conic-gradient(#d4d0c8 0 25%,#fff 0 50%);background-size:2px 2px;"></div>
<div style="left:350px;top:580px;width:16px;height:16px;background:#000;"></div>
<div style="left:350px;top:580px;width:15px;height:15px;background:#d4d0c8;"></div>
<div style="left:351px;top:581px;width:14px;height:14px;background:#808080;"></div>
<div style="left:351px;top:581px;width:13px;height:13px;background:#fff;"></div>
<div style="left:352px;top:582px;width:12px;height:12px;background:#d4d0c8;"></div>
<div style="left:629px;top:580px;width:16px;height:16px;background:#000;"></div>
<div style="left:629px;top:580px;width:15px;height:15px;background:#d4d0c8;"></div>
<div style="left:630px;top:581px;width:14px;height:14px;background:#808080;"></div>
<div style="left:630px;top:581px;width:13px;height:13px;background:#fff;"></div>
<div style="left:631px;top:582px;width:12px;height:12px;background:#d4d0c8;"></div>
<div style="left:357px;top:588px;width:1px;height:1px;background:#fff;"></div>
<div style="left:358px;top:587px;width:1px;height:3px;background:#fff;"></div>
<div style="left:359px;top:586px;width:1px;height:5px;background:#fff;"></div>
<div style="left:360px;top:585px;width:1px;height:7px;background:#fff;"></div>
<div style="left:356px;top:587px;width:1px;height:1px;background:#a0a0a8;"></div>
<div style="left:357px;top:586px;width:1px;height:3px;background:#a0a0a8;"></div>
<div style="left:358px;top:585px;width:1px;height:5px;background:#a0a0a8;"></div>
<div style="left:359px;top:584px;width:1px;height:7px;background:#a0a0a8;"></div>
<div style="left:636px;top:585px;width:1px;height:7px;background:#fff;"></div>
<div style="left:637px;top:586px;width:1px;height:5px;background:#fff;"></div>
<div style="left:638px;top:587px;width:1px;height:3px;background:#fff;"></div>
<div style="left:639px;top:588px;width:1px;height:1px;background:#fff;"></div>
<div style="left:635px;top:584px;width:1px;height:7px;background:#a0a0a8;"></div>
<div style="left:636px;top:585px;width:1px;height:5px;background:#a0a0a8;"></div>
<div style="left:637px;top:586px;width:1px;height:3px;background:#a0a0a8;"></div>
<div style="left:638px;top:587px;width:1px;height:1px;background:#a0a0a8;"></div>
<div style="left:361px;top:110px;width:1px;height:10px;background:#000;"></div>
<div style="left:361px;top:119px;width:8px;height:1px;background:#000;"></div>
<div style="left:357px;top:115px;width:9px;height:9px;background:#000;"></div>
<div style="left:358px;top:116px;width:7px;height:7px;background:#fff;"></div>
<div style="left:359px;top:119px;width:5px;height:1px;background:#000;"></div>
<div style="left:374px;top:113px;width:12px;height:12px;background:#000;"></div>
<div style="left:375px;top:114px;width:10px;height:10px;background:#fff;"></div>
<div class="t" style="left:391.25px;top:113px;font-size:13px;line-height:13px;letter-spacing:-0.418px;color:#000;">0.00 MAIN__</div>
<div style="left:379px;top:127px;width:1px;height:10px;background:#000;"></div>
<div style="left:379px;top:136px;width:1px;height:9px;background:#000;"></div>
<div style="left:379px;top:136px;width:8px;height:1px;background:#000;"></div>
<div style="left:375px;top:132px;width:9px;height:9px;background:#000;"></div>
<div style="left:376px;top:133px;width:7px;height:7px;background:#fff;"></div>
<div style="left:377px;top:136px;width:5px;height:1px;background:#000;"></div>
<div style="left:379px;top:134px;width:1px;height:5px;background:#000;"></div>
<div style="left:392px;top:130px;width:12px;height:12px;background:#000;"></div>
<div style="left:393px;top:131px;width:10px;height:10px;background:#fff;"></div>
<div class="t" style="left:409.25px;top:130px;font-size:13px;line-height:13px;letter-spacing:0.184px;color:#000;">0.00 mpi_setup_</div>
<div style="left:379px;top:144px;width:1px;height:10px;background:#000;"></div>
<div style="left:379px;top:153px;width:1px;height:9px;background:#000;"></div>
<div style="left:379px;top:153px;width:8px;height:1px;background:#000;"></div>
<div style="left:392px;top:147px;width:12px;height:12px;background:#000;"></div>
<div style="left:393px;top:148px;width:10px;height:10px;background:#fff;"></div>
<div class="t" style="left:409.25px;top:147px;font-size:13px;line-height:13px;letter-spacing:-0.246px;color:#000;">0.00 MPI_Bcast</div>
<div style="left:379px;top:161px;width:1px;height:10px;background:#000;"></div>
<div style="left:379px;top:170px;width:1px;height:9px;background:#000;"></div>
<div style="left:379px;top:170px;width:8px;height:1px;background:#000;"></div>
<div style="left:375px;top:166px;width:9px;height:9px;background:#000;"></div>
<div style="left:376px;top:167px;width:7px;height:7px;background:#fff;"></div>
<div style="left:377px;top:170px;width:5px;height:1px;background:#000;"></div>
<div style="left:379px;top:168px;width:1px;height:5px;background:#000;"></div>
<div style="left:392px;top:164px;width:12px;height:12px;background:#000;"></div>
<div style="left:393px;top:165px;width:10px;height:10px;background:#fff;"></div>
<div class="t" style="left:409.25px;top:164px;font-size:13px;line-height:13px;letter-spacing:0.184px;color:#000;">0.00 env_setup_</div>
<div style="left:379px;top:178px;width:1px;height:10px;background:#000;"></div>
<div style="left:379px;top:187px;width:1px;height:9px;background:#000;"></div>
<div style="left:379px;top:187px;width:8px;height:1px;background:#000;"></div>
<div style="left:392px;top:181px;width:12px;height:12px;background:#000;"></div>
<div style="left:393px;top:182px;width:10px;height:10px;background:#fff;"></div>
<div class="t" style="left:409.25px;top:181px;font-size:13px;line-height:13px;letter-spacing:0.195px;color:#000;">0.00 zone_setup_</div>
<div style="left:379px;top:195px;width:1px;height:10px;background:#000;"></div>
<div style="left:379px;top:204px;width:1px;height:9px;background:#000;"></div>
<div style="left:379px;top:204px;width:8px;height:1px;background:#000;"></div>
<div style="left:375px;top:200px;width:9px;height:9px;background:#000;"></div>
<div style="left:376px;top:201px;width:7px;height:7px;background:#fff;"></div>
<div style="left:377px;top:204px;width:5px;height:1px;background:#000;"></div>
<div style="left:379px;top:202px;width:1px;height:5px;background:#000;"></div>
<div style="left:392px;top:198px;width:12px;height:12px;background:#000;"></div>
<div style="left:393px;top:199px;width:10px;height:10px;background:#fff;"></div>
<div class="t" style="left:409.25px;top:198px;font-size:13px;line-height:13px;letter-spacing:0.137px;color:#000;">0.00 map_zones_</div>
<div style="left:379px;top:212px;width:1px;height:10px;background:#000;"></div>
<div style="left:379px;top:221px;width:1px;height:9px;background:#000;"></div>
<div style="left:379px;top:221px;width:8px;height:1px;background:#000;"></div>
<div style="left:392px;top:215px;width:12px;height:12px;background:#000;"></div>
<div style="left:393px;top:216px;width:10px;height:10px;background:#fff;"></div>
<div class="t" style="left:409.25px;top:215px;font-size:13px;line-height:13px;letter-spacing:0.183px;color:#000;">0.00 zone_starts_</div>
<div style="left:379px;top:229px;width:1px;height:10px;background:#000;"></div>
<div style="left:379px;top:238px;width:1px;height:9px;background:#000;"></div>
<div style="left:379px;top:238px;width:8px;height:1px;background:#000;"></div>
<div style="left:392px;top:232px;width:12px;height:12px;background:#000;"></div>
<div style="left:393px;top:233px;width:10px;height:10px;background:#fff;"></div>
<div class="t" style="left:409.25px;top:232px;font-size:13px;line-height:13px;letter-spacing:0.179px;color:#000;">0.00 set_constants_</div>
<div style="left:379px;top:246px;width:1px;height:10px;background:#000;"></div>
<div style="left:379px;top:255px;width:1px;height:9px;background:#000;"></div>
<div style="left:379px;top:255px;width:8px;height:1px;background:#000;"></div>
<div style="left:375px;top:251px;width:9px;height:9px;background:#000;"></div>
<div style="left:376px;top:252px;width:7px;height:7px;background:#fff;"></div>
<div style="left:377px;top:255px;width:5px;height:1px;background:#000;"></div>
<div style="left:379px;top:253px;width:1px;height:5px;background:#000;"></div>
<div style="left:392px;top:249px;width:12px;height:12px;background:#000;"></div>
<div style="left:393px;top:250px;width:10px;height:10px;background:#fff;"></div>
<div class="t" style="left:409.25px;top:249px;font-size:13px;line-height:13px;letter-spacing:0.115px;color:#000;">0.00 initialize_</div>
<div style="left:379px;top:263px;width:1px;height:10px;background:#000;"></div>
<div style="left:379px;top:272px;width:1px;height:9px;background:#000;"></div>
<div style="left:379px;top:272px;width:8px;height:1px;background:#000;"></div>
<div style="left:375px;top:268px;width:9px;height:9px;background:#000;"></div>
<div style="left:376px;top:269px;width:7px;height:7px;background:#fff;"></div>
<div style="left:377px;top:272px;width:5px;height:1px;background:#000;"></div>
<div style="left:379px;top:270px;width:1px;height:5px;background:#000;"></div>
<div style="left:392px;top:266px;width:12px;height:12px;background:#000;"></div>
<div style="left:393px;top:267px;width:10px;height:10px;background:#fff;"></div>
<div class="t" style="left:409.25px;top:266px;font-size:13px;line-height:13px;letter-spacing:0.107px;color:#000;">0.00 exact_rhs_</div>
<div style="left:379px;top:280px;width:1px;height:10px;background:#000;"></div>
<div style="left:379px;top:289px;width:1px;height:9px;background:#000;"></div>
<div style="left:379px;top:289px;width:8px;height:1px;background:#000;"></div>
<div style="left:392px;top:283px;width:12px;height:12px;background:#000;"></div>
<div style="left:393px;top:284px;width:10px;height:10px;background:#fff;"></div>
<div class="t" style="left:409.25px;top:283px;font-size:13px;line-height:13px;letter-spacing:0.181px;color:#000;">0.00 timer_clear_</div>
<div style="left:350px;top:298px;width:295px;height:16px;background:#80bdfb;"></div>
<div style="left:379px;top:297px;width:1px;height:10px;background:#000;"></div>
<div style="left:379px;top:306px;width:1px;height:9px;background:#000;"></div>
<div style="left:379px;top:306px;width:8px;height:1px;background:#000;"></div>
<div style="left:375px;top:302px;width:9px;height:9px;background:#000;"></div>
<div style="left:376px;top:303px;width:7px;height:7px;background:#fff;"></div>
<div style="left:377px;top:306px;width:5px;height:1px;background:#000;"></div>
<div style="left:379px;top:304px;width:1px;height:5px;background:#000;"></div>
<div style="left:392px;top:300px;width:12px;height:12px;background:#000;"></div>
<div style="left:393px;top:301px;width:9px;height:1px;background:#fff;"></div>
<div style="left:393px;top:301px;width:1px;height:9px;background:#fff;"></div>
<div style="left:394px;top:302px;width:7px;height:7px;background:#ff0000;"></div>
<div class="t" style="left:409.25px;top:300px;font-size:13px;line-height:13px;letter-spacing:0.319px;color:#000;">2628.67 exch_qbc_</div>
<div style="left:379px;top:314px;width:1px;height:10px;background:#000;"></div>
<div style="left:379px;top:323px;width:1px;height:9px;background:#000;"></div>
<div style="left:379px;top:323px;width:8px;height:1px;background:#000;"></div>
<div style="left:375px;top:319px;width:9px;height:9px;background:#000;"></div>
<div style="left:376px;top:320px;width:7px;height:7px;background:#fff;"></div>
<div style="left:377px;top:323px;width:5px;height:1px;background:#000;"></div>
<div style="left:379px;top:321px;width:1px;height:5px;background:#000;"></div>
<div style="left:392px;top:317px;width:12px;height:12px;background:#000;"></div>
<div style="left:393px;top:318px;width:10px;height:10px;background:#fff;"></div>
<div class="t" style="left:409.25px;top:317px;font-size:13px;line-height:13px;letter-spacing:0.125px;color:#000;">0.00 adi_</div>
<div style="left:379px;top:331px;width:1px;height:10px;background:#000;"></div>
<div style="left:379px;top:340px;width:1px;height:9px;background:#000;"></div>
<div style="left:379px;top:340px;width:8px;height:1px;background:#000;"></div>
<div style="left:392px;top:334px;width:12px;height:12px;background:#000;"></div>
<div style="left:393px;top:335px;width:10px;height:10px;background:#fff;"></div>
<div class="t" style="left:409.25px;top:334px;font-size:13px;line-height:13px;letter-spacing:-0.112px;color:#000;">0.00 MPI_Barrier</div>
<div style="left:379px;top:348px;width:1px;height:10px;background:#000;"></div>
<div style="left:379px;top:357px;width:1px;height:9px;background:#000;"></div>
<div style="left:379px;top:357px;width:8px;height:1px;background:#000;"></div>
<div style="left:392px;top:351px;width:12px;height:12px;background:#000;"></div>
<div style="left:393px;top:352px;width:10px;height:10px;background:#fff;"></div>
<div class="t" style="left:409.25px;top:351px;font-size:13px;line-height:13px;letter-spacing:0.186px;color:#000;">0.00 timer_start_</div>
<div style="left:379px;top:365px;width:1px;height:10px;background:#000;"></div>
<div style="left:379px;top:374px;width:1px;height:9px;background:#000;"></div>
<div style="left:379px;top:374px;width:8px;height:1px;background:#000;"></div>
<div style="left:392px;top:368px;width:12px;height:12px;background:#000;"></div>
<div style="left:393px;top:369px;width:10px;height:10px;background:#fff;"></div>
<div class="t" style="left:409.25px;top:368px;font-size:13px;line-height:13px;letter-spacing:0.248px;color:#000;">0.00 timer_stop_</div>
<div style="left:379px;top:382px;width:1px;height:10px;background:#000;"></div>
<div style="left:379px;top:391px;width:1px;height:9px;background:#000;"></div>
<div style="left:379px;top:391px;width:8px;height:1px;background:#000;"></div>
<div style="left:392px;top:385px;width:12px;height:12px;background:#000;"></div>
<div style="left:393px;top:386px;width:10px;height:10px;background:#fff;"></div>
<div class="t" style="left:409.25px;top:385px;font-size:13px;line-height:13px;letter-spacing:0.217px;color:#000;">0.00 timer_read_</div>
<div style="left:379px;top:399px;width:1px;height:10px;background:#000;"></div>
<div style="left:379px;top:408px;width:1px;height:9px;background:#000;"></div>
<div style="left:379px;top:408px;width:8px;height:1px;background:#000;"></div>
<div style="left:375px;top:404px;width:9px;height:9px;background:#000;"></div>
<div style="left:376px;top:405px;width:7px;height:7px;background:#fff;"></div>
<div style="left:377px;top:408px;width:5px;height:1px;background:#000;"></div>
<div style="left:379px;top:406px;width:1px;height:5px;background:#000;"></div>
<div style="left:392px;top:402px;width:12px;height:12px;background:#000;"></div>
<div style="left:393px;top:403px;width:10px;height:10px;background:#fff;"></div>
<div class="t" style="left:409.25px;top:402px;font-size:13px;line-height:13px;letter-spacing:0.323px;color:#000;">0.00 verify_</div>
<div style="left:379px;top:416px;width:1px;height:10px;background:#000;"></div>
<div style="left:379px;top:425px;width:1px;height:9px;background:#000;"></div>
<div style="left:379px;top:425px;width:8px;height:1px;background:#000;"></div>
<div style="left:392px;top:419px;width:12px;height:12px;background:#000;"></div>
<div style="left:393px;top:420px;width:10px;height:10px;background:#fff;"></div>
<div class="t" style="left:409.25px;top:419px;font-size:13px;line-height:13px;letter-spacing:-0.334px;color:#000;">0.00 MPI_Reduce</div>
<div style="left:379px;top:433px;width:1px;height:10px;background:#000;"></div>
<div style="left:379px;top:442px;width:1px;height:9px;background:#000;"></div>
<div style="left:379px;top:442px;width:8px;height:1px;background:#000;"></div>
<div style="left:392px;top:436px;width:12px;height:12px;background:#000;"></div>
<div style="left:393px;top:437px;width:10px;height:10px;background:#fff;"></div>
<div class="t" style="left:409.25px;top:436px;font-size:13px;line-height:13px;letter-spacing:0.206px;color:#000;">0.00 print_results_</div>
<div style="left:379px;top:450px;width:1px;height:10px;background:#000;"></div>
<div style="left:379px;top:459px;width:8px;height:1px;background:#000;"></div>
<div style="left:392px;top:453px;width:12px;height:12px;background:#000;"></div>
<div style="left:393px;top:454px;width:10px;height:10px;background:#fff;"></div>
<div class="t" style="left:409.25px;top:453px;font-size:13px;line-height:13px;letter-spacing:-0.292px;color:#000;">0.00 MPI_Finalize</div>
<div style="left:346px;top:602px;width:319px;height:38px;background:#000;"></div>
<div style="left:347px;top:603px;width:317px;height:36px;background:#fff;"></div>
<div style="left:347px;top:634px;width:317px;height:1px;background:#000;"></div>
<div style="left:348px;top:635px;width:317px;height:3px;background:#fff;background:linear-gradient(to right,#0000ff 0.00%,#0014ff 0.50%,#0033ff 1.00%,#0044ff 1.50%,#0053ff 2.00%,#0061ff 2.50%,#006eff 3.00%,#007aff 3.50%,#0086ff 4.00%,#0092ff 4.50%,#009dff 5.00%,#00a8ff 5.50%,#00b2ff 6.00%,#00bdff 6.50%,#00c7ff 7.00%,#00d0ff 7.50%,#00daff 8.00%,#00e4ff 8.50%,#00edff 9.00%,#00f6ff 9.50%,#00ffff 10.00%,#00fff6 10.50%,#00ffed 11.00%,#00ffe4 11.50%,#00ffda 12.00%,#00ffd0 12.50%,#00ffc7 13.00%,#00ffbd 13.50%,#00ffb2 14.00%,#00ffa8 14.50%,#00ff9d 15.00%,#00ff92 15.50%,#00ff86 16.00%,#00ff7a 16.50%,#00ff6e 17.00%,#00ff61 17.50%,#00ff53 18.00%,#00ff44 18.50%,#00ff33 19.00%,#00ff14 19.50%,#00ff00 20.00%,#14ff00 20.50%,#33ff00 21.00%,#44ff00 21.50%,#53ff00 22.00%,#61ff00 22.50%,#6eff00 23.00%,#7aff00 23.50%,#86ff00 24.00%,#92ff00 24.50%,#9dff00 25.00%,#a8ff00 25.50%,#b2ff00 26.00%,#bdff00 26.50%,#c7ff00 27.00%,#d0ff00 27.50%,#daff00 28.00%,#e4ff00 28.50%,#edff00 29.00%,#f6ff00 29.50%,#ffff00 30.00%,#fffc00 31.00%,#fffa00 32.00%,#fff700 33.00%,#fff500 34.00%,#fff200 35.00%,#ffef00 36.00%,#ffed00 37.00%,#ffea00 38.00%,#ffe800 39.00%,#ffe500 40.00%,#ffe200 41.00%,#ffe000 42.00%,#ffdd00 43.00%,#ffda00 44.00%,#ffd700 45.00%,#ffd500 46.00%,#ffd200 47.00%,#ffcf00 48.00%,#ffcc00 49.00%,#ffc900 50.00%,#ffc700 51.00%,#ffc400 52.00%,#ffc100 53.00%,#ffbe00 54.00%,#ffbb00 55.00%,#ffb800 56.00%,#ffb500 57.00%,#ffb200 58.00%,#ffaf00 59.00%,#ffac00 60.00%,#ffa900 61.00%,#ffa600 62.00%,#ffa300 63.00%,#ffa000 64.00%,#ff9d00 65.00%,#ff9a00 66.00%,#ff9700 67.00%,#ff9300 68.00%,#ff9000 69.00%,#ff8d00 70.00%,#ff8a00 71.00%,#ff8600 72.00%,#ff8300 73.00%,#ff7f00 74.00%,#ff7c00 75.00%,#ff7900 76.00%,#ff7500 77.00%,#ff7100 78.00%,#ff6e00 79.00%,#ff6a00 80.00%,#ff6600 81.00%,#ff6300 82.00%,#ff5f00 83.00%,#ff5b00 84.00%,#ff5700 85.00%,#ff5300 86.00%,#ff4e00 87.00%,#ff4a00 88.00%,#ff4600 89.00%,#ff4100 90.00%,#ff3d00 91.00%,#ff3800 92.00%,#ff3300 93.00%,#ff2900 94.00%,#ff2000 95.00%,#ff1800 96.00%,#ff1100 97.00%,#ff0a00 98.00%,#ff0500 99.00%,#ff0000 100.00%);background-size:317px 3px;"></div>
<div class="t" style="left:348.00px;top:605px;font-size:14px;line-height:14px;letter-spacing:0.150px;color:#000;">0.00</div>
<div class="t" style="left:431.88px;top:605px;font-size:14px;line-height:14px;letter-spacing:0.253px;color:#000;">2628.67 (100.00%)</div>
<div class="t" style="left:610.98px;top:605px;font-size:14px;line-height:14px;letter-spacing:0.188px;color:#000;">2628.67</div>
<div style="left:673px;top:56px;width:318px;height:23px;background:#fff;"></div>
<div style="left:673px;top:56px;width:317px;height:22px;background:#808080;"></div>
<div style="left:674px;top:57px;width:316px;height:21px;background:#d4d0c8;"></div>
<div style="left:674px;top:57px;width:315px;height:20px;background:#000;"></div>
<div style="left:675px;top:58px;width:314px;height:19px;background:#fff;"></div>
<div style="left:973px;top:58px;width:16px;height:19px;background:#000;"></div>
<div style="left:973px;top:58px;width:15px;height:18px;background:#d4d0c8;"></div>
<div style="left:974px;top:59px;width:14px;height:17px;background:#808080;"></div>
<div style="left:974px;top:59px;width:13px;height:16px;background:#fff;"></div>
<div style="left:975px;top:60px;width:12px;height:15px;background:#d4d0c8;"></div>
<div style="left:977px;top:65px;width:7px;height:1px;background:#000;"></div>
<div style="left:978px;top:66px;width:5px;height:1px;background:#000;"></div>
<div style="left:979px;top:67px;width:3px;height:1px;background:#000;"></div>
<div style="left:980px;top:68px;width:1px;height:1px;background:#000;"></div>
<div class="t" style="left:677.20px;top:60px;font-size:14px;line-height:14px;letter-spacing:0.543px;color:#000;">Absolute</div>
<div style="left:673px;top:107px;width:318px;height:493px;background:#000;"></div>
<div style="left:673px;top:107px;width:317px;height:492px;background:#fff;"></div>
<div style="left:674px;top:108px;width:316px;height:491px;background:#808080;"></div>
<div style="left:674px;top:108px;width:315px;height:490px;background:#d4d0c8;"></div>
<div style="left:673px;top:81px;width:134px;height:27px;background:#000;"></div>
<div style="left:673px;top:81px;width:133px;height:27px;background:#fff;border-top-left-radius:2px;"></div>
<div style="left:674px;top:82px;width:132px;height:26px;background:#808080;"></div>
<div style="left:674px;top:82px;width:131px;height:26px;background:#d4d0c8;"></div>
<svg style="position:absolute;left:685px;top:84px" width="20" height="20" viewBox="0 0 20 20" shape-rendering="crispEdges">
<defs><linearGradient id="ig685" x1="0" x2="1" y1="0" y2="0"><stop offset="0" stop-color="#3a86cc"/><stop offset="1" stop-color="#62c6de"/></linearGradient></defs>
<rect x="0" y="0" width="20" height="20" fill="#2a58b8"/><rect x="1" y="1" width="18" height="18" fill="url(#ig685)"/>
<rect x="2" y="3" width="1" height="11" fill="#333"/><rect x="2" y="4" width="4" height="1" fill="#333"/>
<rect x="2" y="7" width="4" height="1" fill="#3a5a78"/><rect x="5" y="7" width="1" height="5" fill="#333"/>
<rect x="5" y="9" width="3" height="1" fill="#333"/><rect x="5" y="11" width="3" height="1" fill="#333"/>
<rect x="2" y="13" width="4" height="1" fill="#333"/><rect x="5" y="13" width="1" height="4" fill="#333"/><rect x="5" y="16" width="3" height="1" fill="#333"/>
<rect x="7" y="4" width="1" height="1" fill="#3050e0"/><rect x="7" y="6" width="1" height="2" fill="#30d040"/>
<rect x="9" y="9" width="1" height="1" fill="#3050e0"/><rect x="9" y="11" width="2" height="1" fill="#20e030"/>
<rect x="7" y="13" width="1" height="1" fill="#c03040"/><rect x="9" y="16" width="1" height="1" fill="#d0c040"/>
<rect x="9" y="4" width="7" height="1" fill="#556"/><rect x="9" y="7" width="7" height="1" fill="#5a7a90"/>
<rect x="11" y="9" width="7" height="1" fill="#556"/><rect x="11" y="11" width="7" height="1" fill="#556"/>
<rect x="9" y="13" width="7" height="1" fill="#5a7a90"/><rect x="11" y="16" width="7" height="1" fill="#556"/>
</svg>
<div class="t" style="left:708.58px;top:87px;font-size:14px;line-height:14px;letter-spacing:1.130px;color:#000;">System tree</div>
<div style="left:807px;top:83px;width:99px;height:24px;background:#000;"></div>
<div style="left:807px;top:83px;width:98px;height:24px;background:#fff;border-top-left-radius:2px;"></div>
<div style="left:808px;top:84px;width:97px;height:23px;background:#808080;"></div>
<div style="left:808px;top:84px;width:96px;height:23px;background:#d4d0c8;"></div>
<svg style="position:absolute;left:819px;top:85px" width="20" height="20" viewBox="0 0 20 20" shape-rendering="crispEdges">
<defs><linearGradient id="ib819" x1="0" x2="1" y1="0" y2="0"><stop offset="0" stop-color="#3a86cc"/><stop offset="1" stop-color="#62c6de"/></linearGradient></defs>
<rect x="0" y="0" width="20" height="20" fill="#2a58b8"/><rect x="1" y="1" width="18" height="18" fill="url(#ib819)"/>
<rect x="7" y="2" width="7" height="1" fill="#444"/><rect x="10" y="2" width="1" height="16" fill="#444"/>
<rect x="7" y="18" width="7" height="1" fill="#444"/>
<rect x="7" y="6" width="7" height="9" fill="#f01808"/><rect x="7" y="11" width="7" height="1" fill="#801008"/>
</svg>
<div class="t" style="left:843.38px;top:88px;font-size:14px;line-height:14px;letter-spacing:0.562px;color:#000;">BoxPlot</div>
<div style="left:675px;top:109px;width:314px;height:451px;background:#fff;"></div>
<div style="left:675px;top:109px;width:313px;height:450px;background:#808080;"></div>
<div style="left:676px;top:110px;width:312px;height:449px;background:#d4d0c8;"></div>
<div style="left:676px;top:110px;width:311px;height:448px;background:#000;"></div>
<div style="left:677px;top:111px;width:310px;height:447px;background:#fff;"></div>
<div style="left:971px;top:111px;width:16px;height:431px;background:#fff;background-image:repeating-conic-gradient(#d4d0c8 0 25%,#fff 0 50%);background-size:2px 2px;"></div>
<div style="left:971px;top:111px;width:16px;height:16px;background:#000;"></div>
<div style="left:971px;top:111px;width:15px;height:15px;background:#d4d0c8;"></div>
<div style="left:972px;top:112px;width:14px;height:14px;background:#808080;"></div>
<div style="left:972px;top:112px;width:13px;height:13px;background:#fff;"></div>
<div style="left:973px;top:113px;width:12px;height:12px;background:#d4d0c8;"></div>
<div style="left:971px;top:526px;width:16px;height:16px;background:#000;"></div>
<div style="left:971px;top:526px;width:15px;height:15px;background:#d4d0c8;"></div>
<div style="left:972px;top:527px;width:14px;height:14px;background:#808080;"></div>
<div style="left:972px;top:527px;width:13px;height:13px;background:#fff;"></div>
<div style="left:973px;top:528px;width:12px;height:12px;background:#d4d0c8;"></div>
<div style="left:979px;top:118px;width:1px;height:1px;background:#fff;"></div>
<div style="left:978px;top:119px;width:3px;height:1px;background:#fff;"></div>
<div style="left:977px;top:120px;width:5px;height:1px;background:#fff;"></div>
<div style="left:976px;top:121px;width:7px;height:1px;background:#fff;"></div>
<div style="left:978px;top:117px;width:1px;height:1px;background:#a0a0a8;"></div>
<div style="left:977px;top:118px;width:3px;height:1px;background:#a0a0a8;"></div>
<div style="left:976px;top:119px;width:5px;height:1px;background:#a0a0a8;"></div>
<div style="left:975px;top:120px;width:7px;height:1px;background:#a0a0a8;"></div>
<div style="left:976px;top:533px;width:7px;height:1px;background:#fff;"></div>
<div style="left:977px;top:534px;width:5px;height:1px;background:#fff;"></div>
<div style="left:978px;top:535px;width:3px;height:1px;background:#fff;"></div>
<div style="left:979px;top:536px;width:1px;height:1px;background:#fff;"></div>
<div style="left:975px;top:532px;width:7px;height:1px;background:#a0a0a8;"></div>
<div style="left:976px;top:533px;width:5px;height:1px;background:#a0a0a8;"></div>
<div style="left:977px;top:534px;width:3px;height:1px;background:#a0a0a8;"></div>
<div style="left:978px;top:535px;width:1px;height:1px;background:#a0a0a8;"></div>
<div style="left:971px;top:542px;width:16px;height:16px;background:#d4d0c8;"></div>
<div style="left:677px;top:542px;width:294px;height:16px;background:#fff;background-image:repeating-conic-gradient(#d4d0c8 0 25%,#fff 0 50%);background-size:2px 2px;"></div>
<div style="left:677px;top:542px;width:16px;height:16px;background:#000;"></div>
<div style="left:677px;top:542px;width:15px;height:15px;background:#d4d0c8;"></div>
<div style="left:678px;top:543px;width:14px;height:14px;background:#808080;"></div>
<div style="left:678px;top:543px;width:13px;height:13px;background:#fff;"></div>
<div style="left:679px;top:544px;width:12px;height:12px;background:#d4d0c8;"></div>
<div style="left:955px;top:542px;width:16px;height:16px;background:#000;"></div>
<div style="left:955px;top:542px;width:15px;height:15px;background:#d4d0c8;"></div>
<div style="left:956px;top:543px;width:14px;height:14px;background:#808080;"></div>
<div style="left:956px;top:543px;width:13px;height:13px;background:#fff;"></div>
<div style="left:957px;top:544px;width:12px;height:12px;background:#d4d0c8;"></div>
<div style="left:684px;top:550px;width:1px;height:1px;background:#fff;"></div>
<div style="left:685px;top:549px;width:1px;height:3px;background:#fff;"></div>
<div style="left:686px;top:548px;width:1px;height:5px;background:#fff;"></div>
<div style="left:687px;top:547px;width:1px;height:7px;background:#fff;"></div>
<div style="left:683px;top:549px;width:1px;height:1px;background:#a0a0a8;"></div>
<div style="left:684px;top:548px;width:1px;height:3px;background:#a0a0a8;"></div>
<div style="left:685px;top:547px;width:1px;height:5px;background:#a0a0a8;"></div>
<div style="left:686px;top:546px;width:1px;height:7px;background:#a0a0a8;"></div>
<div style="left:962px;top:547px;width:1px;height:7px;background:#fff;"></div>
<div style="left:963px;top:548px;width:1px;height:5px;background:#fff;"></div>
<div style="left:964px;top:549px;width:1px;height:3px;background:#fff;"></div>
<div style="left:965px;top:550px;width:1px;height:1px;background:#fff;"></div>
<div style="left:961px;top:546px;width:1px;height:7px;background:#a0a0a8;"></div>
<div style="left:962px;top:547px;width:1px;height:5px;background:#a0a0a8;"></div>
<div style="left:963px;top:548px;width:1px;height:3px;background:#a0a0a8;"></div>
<div style="left:964px;top:549px;width:1px;height:1px;background:#a0a0a8;"></div>
<div style="left:688px;top:110px;width:1px;height:10px;background:#000;"></div>
<div style="left:688px;top:119px;width:8px;height:1px;background:#000;"></div>
<div style="left:684px;top:115px;width:9px;height:9px;background:#000;"></div>
<div style="left:685px;top:116px;width:7px;height:7px;background:#fff;"></div>
<div style="left:686px;top:119px;width:5px;height:1px;background:#000;"></div>
<div style="left:701px;top:113px;width:12px;height:12px;background:#000;"></div>
<div style="left:702px;top:114px;width:10px;height:10px;background:#fff;"></div>
<div class="t" style="left:718.00px;top:113px;font-size:13px;line-height:13px;letter-spacing:0.230px;color:#000;">- machine anselm</div>
<div style="left:706px;top:127px;width:1px;height:10px;background:#000;"></div>
<div style="left:706px;top:136px;width:1px;height:9px;background:#000;"></div>
<div style="left:706px;top:136px;width:8px;height:1px;background:#000;"></div>
<div style="left:702px;top:132px;width:9px;height:9px;background:#000;"></div>
<div style="left:703px;top:133px;width:7px;height:7px;background:#fff;"></div>
<div style="left:704px;top:136px;width:5px;height:1px;background:#000;"></div>
<div style="left:706px;top:134px;width:1px;height:5px;background:#000;"></div>
<div style="left:719px;top:130px;width:12px;height:12px;background:#000;"></div>
<div style="left:720px;top:131px;width:9px;height:1px;background:#fff;"></div>
<div style="left:720px;top:131px;width:1px;height:9px;background:#fff;"></div>
<div style="left:721px;top:132px;width:7px;height:7px;background:#8bff00;"></div>
<div class="t" style="left:736.12px;top:130px;font-size:13px;line-height:13px;letter-spacing:0.445px;color:#000;">636.32 node cn182</div>
<div style="left:706px;top:144px;width:1px;height:10px;background:#000;"></div>
<div style="left:706px;top:153px;width:1px;height:9px;background:#000;"></div>
<div style="left:706px;top:153px;width:8px;height:1px;background:#000;"></div>
<div style="left:702px;top:149px;width:9px;height:9px;background:#000;"></div>
<div style="left:703px;top:150px;width:7px;height:7px;background:#fff;"></div>
<div style="left:704px;top:153px;width:5px;height:1px;background:#000;"></div>
<div style="left:719px;top:147px;width:12px;height:12px;background:#000;"></div>
<div style="left:720px;top:148px;width:10px;height:10px;background:#fff;"></div>
<div class="t" style="left:736.00px;top:147px;font-size:13px;line-height:13px;letter-spacing:0.382px;color:#000;">- node cn184</div>
<div style="left:677px;top:162px;width:294px;height:16px;background:#80bdfb;"></div>
<div style="left:706px;top:162px;width:1px;height:17px;background:#000;"></div>
<div style="left:724px;top:161px;width:1px;height:10px;background:#000;"></div>
<div style="left:724px;top:170px;width:1px;height:9px;background:#000;"></div>
<div style="left:724px;top:170px;width:8px;height:1px;background:#000;"></div>
<div style="left:737px;top:164px;width:12px;height:12px;background:#000;"></div>
<div style="left:738px;top:165px;width:9px;height:1px;background:#fff;"></div>
<div style="left:738px;top:165px;width:1px;height:9px;background:#fff;"></div>
<div style="left:739px;top:166px;width:7px;height:7px;background:#001cff;"></div>
<div class="t" style="left:754.38px;top:164px;font-size:13px;line-height:13px;letter-spacing:-0.352px;color:#000;">16.93 MPI Rank 1</div>
<div style="left:706px;top:179px;width:1px;height:17px;background:#000;"></div>
<div style="left:724px;top:178px;width:1px;height:10px;background:#000;"></div>
<div style="left:724px;top:187px;width:1px;height:9px;background:#000;"></div>
<div style="left:724px;top:187px;width:8px;height:1px;background:#000;"></div>
<div style="left:737px;top:181px;width:12px;height:12px;background:#000;"></div>
<div style="left:738px;top:182px;width:9px;height:1px;background:#fff;"></div>
<div style="left:738px;top:182px;width:1px;height:9px;background:#fff;"></div>
<div style="left:739px;top:183px;width:7px;height:7px;background:#0030ff;"></div>
<div class="t" style="left:754.25px;top:181px;font-size:13px;line-height:13px;letter-spacing:-0.258px;color:#000;">25.13 MPI Rank 5</div>
<div style="left:706px;top:196px;width:1px;height:17px;background:#000;"></div>
<div style="left:724px;top:195px;width:1px;height:10px;background:#000;"></div>
<div style="left:724px;top:204px;width:1px;height:9px;background:#000;"></div>
<div style="left:724px;top:204px;width:8px;height:1px;background:#000;"></div>
<div style="left:737px;top:198px;width:12px;height:12px;background:#000;"></div>
<div style="left:738px;top:199px;width:9px;height:1px;background:#fff;"></div>
<div style="left:738px;top:199px;width:1px;height:9px;background:#fff;"></div>
<div style="left:739px;top:200px;width:7px;height:7px;background:#003aff;"></div>
<div class="t" style="left:754.38px;top:198px;font-size:13px;line-height:13px;letter-spacing:-0.258px;color:#000;">31.85 MPI Rank 9</div>
<div style="left:706px;top:213px;width:1px;height:17px;background:#000;"></div>
<div style="left:724px;top:212px;width:1px;height:10px;background:#000;"></div>
<div style="left:724px;top:221px;width:1px;height:9px;background:#000;"></div>
<div style="left:724px;top:221px;width:8px;height:1px;background:#000;"></div>
<div style="left:737px;top:215px;width:12px;height:12px;background:#000;"></div>
<div style="left:738px;top:216px;width:9px;height:1px;background:#fff;"></div>
<div style="left:738px;top:216px;width:1px;height:9px;background:#fff;"></div>
<div style="left:739px;top:217px;width:7px;height:7px;background:#003fff;"></div>
<div class="t" style="left:754.38px;top:215px;font-size:13px;line-height:13px;letter-spacing:-0.189px;color:#000;">35.52 MPI Rank 13</div>
<div style="left:706px;top:230px;width:1px;height:17px;background:#000;"></div>
<div style="left:724px;top:229px;width:1px;height:10px;background:#000;"></div>
<div style="left:724px;top:238px;width:1px;height:9px;background:#000;"></div>
<div style="left:724px;top:238px;width:8px;height:1px;background:#000;"></div>
<div style="left:737px;top:232px;width:12px;height:12px;background:#000;"></div>
<div style="left:738px;top:233px;width:9px;height:1px;background:#fff;"></div>
<div style="left:738px;top:233px;width:1px;height:9px;background:#fff;"></div>
<div style="left:739px;top:234px;width:7px;height:7px;background:#0043ff;"></div>
<div class="t" style="left:754.38px;top:232px;font-size:13px;line-height:13px;letter-spacing:-0.194px;color:#000;">38.74 MPI Rank 17</div>
<div style="left:706px;top:247px;width:1px;height:17px;background:#000;"></div>
<div style="left:724px;top:246px;width:1px;height:10px;background:#000;"></div>
<div style="left:724px;top:255px;width:1px;height:9px;background:#000;"></div>
<div style="left:724px;top:255px;width:8px;height:1px;background:#000;"></div>
<div style="left:737px;top:249px;width:12px;height:12px;background:#000;"></div>
<div style="left:738px;top:250px;width:9px;height:1px;background:#fff;"></div>
<div style="left:738px;top:250px;width:1px;height:9px;background:#fff;"></div>
<div style="left:739px;top:251px;width:7px;height:7px;background:#0045ff;"></div>
<div class="t" style="left:754.25px;top:249px;font-size:13px;line-height:13px;letter-spacing:-0.186px;color:#000;">40.73 MPI Rank 21</div>
<div style="left:706px;top:264px;width:1px;height:17px;background:#000;"></div>
<div style="left:724px;top:263px;width:1px;height:10px;background:#000;"></div>
<div style="left:724px;top:272px;width:1px;height:9px;background:#000;"></div>
<div style="left:724px;top:272px;width:8px;height:1px;background:#000;"></div>
<div style="left:737px;top:266px;width:12px;height:12px;background:#000;"></div>
<div style="left:738px;top:267px;width:9px;height:1px;background:#fff;"></div>
<div style="left:738px;top:267px;width:1px;height:9px;background:#fff;"></div>
<div style="left:739px;top:268px;width:7px;height:7px;background:#0046ff;"></div>
<div class="t" style="left:754.25px;top:266px;font-size:13px;line-height:13px;letter-spacing:-0.194px;color:#000;">41.67 MPI Rank 25</div>
<div style="left:706px;top:281px;width:1px;height:17px;background:#000;"></div>
<div style="left:724px;top:280px;width:1px;height:10px;background:#000;"></div>
<div style="left:724px;top:289px;width:1px;height:9px;background:#000;"></div>
<div style="left:724px;top:289px;width:8px;height:1px;background:#000;"></div>
<div style="left:737px;top:283px;width:12px;height:12px;background:#000;"></div>
<div style="left:738px;top:284px;width:9px;height:1px;background:#fff;"></div>
<div style="left:738px;top:284px;width:1px;height:9px;background:#fff;"></div>
<div style="left:739px;top:285px;width:7px;height:7px;background:#0049ff;"></div>
<div class="t" style="left:754.25px;top:283px;font-size:13px;line-height:13px;letter-spacing:-0.111px;color:#000;">43.75 MPI Rank 29</div>
<div style="left:706px;top:298px;width:1px;height:17px;background:#000;"></div>
<div style="left:724px;top:297px;width:1px;height:10px;background:#000;"></div>
<div style="left:724px;top:306px;width:1px;height:9px;background:#000;"></div>
<div style="left:724px;top:306px;width:8px;height:1px;background:#000;"></div>
<div style="left:737px;top:300px;width:12px;height:12px;background:#000;"></div>
<div style="left:738px;top:301px;width:9px;height:1px;background:#fff;"></div>
<div style="left:738px;top:301px;width:1px;height:9px;background:#fff;"></div>
<div style="left:739px;top:302px;width:7px;height:7px;background:#0049ff;"></div>
<div class="t" style="left:754.25px;top:300px;font-size:13px;line-height:13px;letter-spacing:-0.119px;color:#000;">43.79 MPI Rank 33</div>
<div style="left:706px;top:315px;width:1px;height:17px;background:#000;"></div>
<div style="left:724px;top:314px;width:1px;height:10px;background:#000;"></div>
<div style="left:724px;top:323px;width:1px;height:9px;background:#000;"></div>
<div style="left:724px;top:323px;width:8px;height:1px;background:#000;"></div>
<div style="left:737px;top:317px;width:12px;height:12px;background:#000;"></div>
<div style="left:738px;top:318px;width:9px;height:1px;background:#fff;"></div>
<div style="left:738px;top:318px;width:1px;height:9px;background:#fff;"></div>
<div style="left:739px;top:319px;width:7px;height:7px;background:#004bff;"></div>
<div class="t" style="left:754.25px;top:317px;font-size:13px;line-height:13px;letter-spacing:-0.111px;color:#000;">45.74 MPI Rank 37</div>
<div style="left:706px;top:332px;width:1px;height:17px;background:#000;"></div>
<div style="left:724px;top:331px;width:1px;height:10px;background:#000;"></div>
<div style="left:724px;top:340px;width:1px;height:9px;background:#000;"></div>
<div style="left:724px;top:340px;width:8px;height:1px;background:#000;"></div>
<div style="left:737px;top:334px;width:12px;height:12px;background:#000;"></div>
<div style="left:738px;top:335px;width:9px;height:1px;background:#fff;"></div>
<div style="left:738px;top:335px;width:1px;height:9px;background:#fff;"></div>
<div style="left:739px;top:336px;width:7px;height:7px;background:#004bff;"></div>
<div class="t" style="left:754.25px;top:334px;font-size:13px;line-height:13px;letter-spacing:-0.186px;color:#000;">45.66 MPI Rank 41</div>
<div style="left:706px;top:349px;width:1px;height:17px;background:#000;"></div>
<div style="left:724px;top:348px;width:1px;height:10px;background:#000;"></div>
<div style="left:724px;top:357px;width:1px;height:9px;background:#000;"></div>
<div style="left:724px;top:357px;width:8px;height:1px;background:#000;"></div>
<div style="left:737px;top:351px;width:12px;height:12px;background:#000;"></div>
<div style="left:738px;top:352px;width:9px;height:1px;background:#fff;"></div>
<div style="left:738px;top:352px;width:1px;height:9px;background:#fff;"></div>
<div style="left:739px;top:353px;width:7px;height:7px;background:#004cff;"></div>
<div class="t" style="left:754.25px;top:351px;font-size:13px;line-height:13px;letter-spacing:-0.119px;color:#000;">47.04 MPI Rank 45</div>
<div style="left:706px;top:366px;width:1px;height:17px;background:#000;"></div>
<div style="left:724px;top:365px;width:1px;height:10px;background:#000;"></div>
<div style="left:724px;top:374px;width:1px;height:9px;background:#000;"></div>
<div style="left:724px;top:374px;width:8px;height:1px;background:#000;"></div>
<div style="left:737px;top:368px;width:12px;height:12px;background:#000;"></div>
<div style="left:738px;top:369px;width:9px;height:1px;background:#fff;"></div>
<div style="left:738px;top:369px;width:1px;height:9px;background:#fff;"></div>
<div style="left:739px;top:370px;width:7px;height:7px;background:#004eff;"></div>
<div class="t" style="left:754.25px;top:368px;font-size:13px;line-height:13px;letter-spacing:-0.111px;color:#000;">48.03 MPI Rank 49</div>
<div style="left:706px;top:383px;width:1px;height:17px;background:#000;"></div>
<div style="left:724px;top:382px;width:1px;height:10px;background:#000;"></div>
<div style="left:724px;top:391px;width:1px;height:9px;background:#000;"></div>
<div style="left:724px;top:391px;width:8px;height:1px;background:#000;"></div>
<div style="left:737px;top:385px;width:12px;height:12px;background:#000;"></div>
<div style="left:738px;top:386px;width:9px;height:1px;background:#fff;"></div>
<div style="left:738px;top:386px;width:1px;height:9px;background:#fff;"></div>
<div style="left:739px;top:387px;width:7px;height:7px;background:#004eff;"></div>
<div class="t" style="left:754.25px;top:385px;font-size:13px;line-height:13px;letter-spacing:-0.119px;color:#000;">48.45 MPI Rank 53</div>
<div style="left:706px;top:400px;width:1px;height:17px;background:#000;"></div>
<div style="left:724px;top:399px;width:1px;height:10px;background:#000;"></div>
<div style="left:724px;top:408px;width:1px;height:9px;background:#000;"></div>
<div style="left:724px;top:408px;width:8px;height:1px;background:#000;"></div>
<div style="left:737px;top:402px;width:12px;height:12px;background:#000;"></div>
<div style="left:738px;top:403px;width:9px;height:1px;background:#fff;"></div>
<div style="left:738px;top:403px;width:1px;height:9px;background:#fff;"></div>
<div style="left:739px;top:404px;width:7px;height:7px;background:#004fff;"></div>
<div class="t" style="left:754.25px;top:402px;font-size:13px;line-height:13px;letter-spacing:-0.111px;color:#000;">49.09 MPI Rank 57</div>
<div style="left:706px;top:417px;width:1px;height:17px;background:#000;"></div>
<div style="left:724px;top:416px;width:1px;height:10px;background:#000;"></div>
<div style="left:724px;top:425px;width:8px;height:1px;background:#000;"></div>
<div style="left:737px;top:419px;width:12px;height:12px;background:#000;"></div>
<div style="left:738px;top:420px;width:9px;height:1px;background:#fff;"></div>
<div style="left:738px;top:420px;width:1px;height:9px;background:#fff;"></div>
<div style="left:739px;top:421px;width:7px;height:7px;background:#0050ff;"></div>
<div class="t" style="left:754.38px;top:419px;font-size:13px;line-height:13px;letter-spacing:-0.194px;color:#000;">50.39 MPI Rank 61</div>
<div style="left:706px;top:433px;width:1px;height:10px;background:#000;"></div>
<div style="left:706px;top:442px;width:1px;height:9px;background:#000;"></div>
<div style="left:706px;top:442px;width:8px;height:1px;background:#000;"></div>
<div style="left:702px;top:438px;width:9px;height:9px;background:#000;"></div>
<div style="left:703px;top:439px;width:7px;height:7px;background:#fff;"></div>
<div style="left:704px;top:442px;width:5px;height:1px;background:#000;"></div>
<div style="left:706px;top:440px;width:1px;height:5px;background:#000;"></div>
<div style="left:719px;top:436px;width:12px;height:12px;background:#000;"></div>
<div style="left:720px;top:437px;width:9px;height:1px;background:#fff;"></div>
<div style="left:720px;top:437px;width:1px;height:9px;background:#fff;"></div>
<div style="left:721px;top:438px;width:7px;height:7px;background:#a1ff00;"></div>
<div class="t" style="left:736.12px;top:436px;font-size:13px;line-height:13px;letter-spacing:0.438px;color:#000;">662.53 node cn186</div>
<div style="left:706px;top:450px;width:1px;height:10px;background:#000;"></div>
<div style="left:706px;top:459px;width:8px;height:1px;background:#000;"></div>
<div style="left:702px;top:455px;width:9px;height:9px;background:#000;"></div>
<div style="left:703px;top:456px;width:7px;height:7px;background:#fff;"></div>
<div style="left:704px;top:459px;width:5px;height:1px;background:#000;"></div>
<div style="left:706px;top:457px;width:1px;height:5px;background:#000;"></div>
<div style="left:719px;top:453px;width:12px;height:12px;background:#000;"></div>
<div style="left:720px;top:454px;width:9px;height:1px;background:#fff;"></div>
<div style="left:720px;top:454px;width:1px;height:9px;background:#fff;"></div>
<div style="left:721px;top:455px;width:7px;height:7px;background:#adff00;"></div>
<div class="t" style="left:736.12px;top:453px;font-size:13px;line-height:13px;letter-spacing:0.413px;color:#000;">677.31 node cn183</div>
<div style="left:675px;top:564px;width:314px;height:1px;background:#808080;"></div>
<div style="left:675px;top:565px;width:314px;height:1px;background:#fff;"></div>
<div style="left:968px;top:561px;width:8px;height:8px;background:#000;"></div>
<div style="left:968px;top:561px;width:7px;height:7px;background:#d4d0c8;"></div>
<div style="left:969px;top:562px;width:6px;height:6px;background:#808080;"></div>
<div style="left:969px;top:562px;width:5px;height:5px;background:#fff;"></div>
<div style="left:970px;top:563px;width:4px;height:4px;background:#d4d0c8;"></div>
<div style="left:675px;top:570px;width:314px;height:28px;background:#fff;"></div>
<div style="left:675px;top:570px;width:313px;height:27px;background:#808080;"></div>
<div style="left:676px;top:571px;width:312px;height:26px;background:#d4d0c8;"></div>
<div style="left:676px;top:571px;width:311px;height:25px;background:#000;"></div>
<div style="left:677px;top:572px;width:310px;height:24px;background:#fff;"></div>
<div style="left:971px;top:572px;width:16px;height:23px;background:#000;"></div>
<div style="left:971px;top:572px;width:15px;height:22px;background:#d4d0c8;"></div>
<div style="left:972px;top:573px;width:14px;height:21px;background:#808080;"></div>
<div style="left:972px;top:573px;width:13px;height:20px;background:#fff;"></div>
<div style="left:973px;top:574px;width:12px;height:19px;background:#d4d0c8;"></div>
<div style="left:975px;top:582px;width:7px;height:1px;background:#000;"></div>
<div style="left:976px;top:583px;width:5px;height:1px;background:#000;"></div>
<div style="left:977px;top:584px;width:3px;height:1px;background:#000;"></div>
<div style="left:978px;top:585px;width:1px;height:1px;background:#000;"></div>
<div class="t" style="left:679.50px;top:576px;font-size:14px;line-height:14px;letter-spacing:0.541px;color:#000;">All (64 elements)</div>
<div style="left:673px;top:602px;width:318px;height:38px;background:#000;"></div>
<div style="left:674px;top:603px;width:316px;height:36px;background:#fff;"></div>
<div style="left:674px;top:634px;width:316px;height:1px;background:#000;"></div>
<div style="left:675px;top:635px;width:2px;height:3px;background:#fff;background:linear-gradient(to right,#0000ff 0.00%,#0014ff 0.50%,#0033ff 1.00%,#0044ff 1.50%,#0053ff 2.00%,#0061ff 2.50%,#006eff 3.00%,#007aff 3.50%,#0086ff 4.00%,#0092ff 4.50%,#009dff 5.00%,#00a8ff 5.50%,#00b2ff 6.00%,#00bdff 6.50%,#00c7ff 7.00%,#00d0ff 7.50%,#00daff 8.00%,#00e4ff 8.50%,#00edff 9.00%,#00f6ff 9.50%,#00ffff 10.00%,#00fff6 10.50%,#00ffed 11.00%,#00ffe4 11.50%,#00ffda 12.00%,#00ffd0 12.50%,#00ffc7 13.00%,#00ffbd 13.50%,#00ffb2 14.00%,#00ffa8 14.50%,#00ff9d 15.00%,#00ff92 15.50%,#00ff86 16.00%,#00ff7a 16.50%,#00ff6e 17.00%,#00ff61 17.50%,#00ff53 18.00%,#00ff44 18.50%,#00ff33 19.00%,#00ff14 19.50%,#00ff00 20.00%,#14ff00 20.50%,#33ff00 21.00%,#44ff00 21.50%,#53ff00 22.00%,#61ff00 22.50%,#6eff00 23.00%,#7aff00 23.50%,#86ff00 24.00%,#92ff00 24.50%,#9dff00 25.00%,#a8ff00 25.50%,#b2ff00 26.00%,#bdff00 26.50%,#c7ff00 27.00%,#d0ff00 27.50%,#daff00 28.00%,#e4ff00 28.50%,#edff00 29.00%,#f6ff00 29.50%,#ffff00 30.00%,#fffc00 31.00%,#fffa00 32.00%,#fff700 33.00%,#fff500 34.00%,#fff200 35.00%,#ffef00 36.00%,#ffed00 37.00%,#ffea00 38.00%,#ffe800 39.00%,#ffe500 40.00%,#ffe200 41.00%,#ffe000 42.00%,#ffdd00 43.00%,#ffda00 44.00%,#ffd700 45.00%,#ffd500 46.00%,#ffd200 47.00%,#ffcf00 48.00%,#ffcc00 49.00%,#ffc900 50.00%,#ffc700 51.00%,#ffc400 52.00%,#ffc100 53.00%,#ffbe00 54.00%,#ffbb00 55.00%,#ffb800 56.00%,#ffb500 57.00%,#ffb200 58.00%,#ffaf00 59.00%,#ffac00 60.00%,#ffa900 61.00%,#ffa600 62.00%,#ffa300 63.00%,#ffa000 64.00%,#ff9d00 65.00%,#ff9a00 66.00%,#ff9700 67.00%,#ff9300 68.00%,#ff9000 69.00%,#ff8d00 70.00%,#ff8a00 71.00%,#ff8600 72.00%,#ff8300 73.00%,#ff7f00 74.00%,#ff7c00 75.00%,#ff7900 76.00%,#ff7500 77.00%,#ff7100 78.00%,#ff6e00 79.00%,#ff6a00 80.00%,#ff6600 81.00%,#ff6300 82.00%,#ff5f00 83.00%,#ff5b00 84.00%,#ff5700 85.00%,#ff5300 86.00%,#ff4e00 87.00%,#ff4a00 88.00%,#ff4600 89.00%,#ff4100 90.00%,#ff3d00 91.00%,#ff3800 92.00%,#ff3300 93.00%,#ff2900 94.00%,#ff2000 95.00%,#ff1800 96.00%,#ff1100 97.00%,#ff0a00 98.00%,#ff0500 99.00%,#ff0000 100.00%);background-size:317px 3px;"></div>
<div class="t" style="left:675.00px;top:605px;font-size:14px;line-height:14px;letter-spacing:0.150px;color:#000;">0.00</div>
<div class="t" style="left:774.20px;top:605px;font-size:14px;line-height:14px;letter-spacing:0.323px;color:#000;">16.93 (0.64%)</div>
<div class="t" style="left:936.98px;top:605px;font-size:14px;line-height:14px;letter-spacing:0.188px;color:#000;">2628.67</div>
<div style="left:18px;top:644px;width:975px;height:20px;background:linear-gradient(to right,#0000ff 0.00%,#0014ff 0.50%,#0033ff 1.00%,#0044ff 1.50%,#0053ff 2.00%,#0061ff 2.50%,#006eff 3.00%,#007aff 3.50%,#0086ff 4.00%,#0092ff 4.50%,#009dff 5.00%,#00a8ff 5.50%,#00b2ff 6.00%,#00bdff 6.50%,#00c7ff 7.00%,#00d0ff 7.50%,#00daff 8.00%,#00e4ff 8.50%,#00edff 9.00%,#00f6ff 9.50%,#00ffff 10.00%,#00fff6 10.50%,#00ffed 11.00%,#00ffe4 11.50%,#00ffda 12.00%,#00ffd0 12.50%,#00ffc7 13.00%,#00ffbd 13.50%,#00ffb2 14.00%,#00ffa8 14.50%,#00ff9d 15.00%,#00ff92 15.50%,#00ff86 16.00%,#00ff7a 16.50%,#00ff6e 17.00%,#00ff61 17.50%,#00ff53 18.00%,#00ff44 18.50%,#00ff33 19.00%,#00ff14 19.50%,#00ff00 20.00%,#14ff00 20.50%,#33ff00 21.00%,#44ff00 21.50%,#53ff00 22.00%,#61ff00 22.50%,#6eff00 23.00%,#7aff00 23.50%,#86ff00 24.00%,#92ff00 24.50%,#9dff00 25.00%,#a8ff00 25.50%,#b2ff00 26.00%,#bdff00 26.50%,#c7ff00 27.00%,#d0ff00 27.50%,#daff00 28.00%,#e4ff00 28.50%,#edff00 29.00%,#f6ff00 29.50%,#ffff00 30.00%,#fffc00 31.00%,#fffa00 32.00%,#fff700 33.00%,#fff500 34.00%,#fff200 35.00%,#ffef00 36.00%,#ffed00 37.00%,#ffea00 38.00%,#ffe800 39.00%,#ffe500 40.00%,#ffe200 41.00%,#ffe000 42.00%,#ffdd00 43.00%,#ffda00 44.00%,#ffd700 45.00%,#ffd500 46.00%,#ffd200 47.00%,#ffcf00 48.00%,#ffcc00 49.00%,#ffc900 50.00%,#ffc700 51.00%,#ffc400 52.00%,#ffc100 53.00%,#ffbe00 54.00%,#ffbb00 55.00%,#ffb800 56.00%,#ffb500 57.00%,#ffb200 58.00%,#ffaf00 59.00%,#ffac00 60.00%,#ffa900 61.00%,#ffa600 62.00%,#ffa300 63.00%,#ffa000 64.00%,#ff9d00 65.00%,#ff9a00 66.00%,#ff9700 67.00%,#ff9300 68.00%,#ff9000 69.00%,#ff8d00 70.00%,#ff8a00 71.00%,#ff8600 72.00%,#ff8300 73.00%,#ff7f00 74.00%,#ff7c00 75.00%,#ff7900 76.00%,#ff7500 77.00%,#ff7100 78.00%,#ff6e00 79.00%,#ff6a00 80.00%,#ff6600 81.00%,#ff6300 82.00%,#ff5f00 83.00%,#ff5b00 84.00%,#ff5700 85.00%,#ff5300 86.00%,#ff4e00 87.00%,#ff4a00 88.00%,#ff4600 89.00%,#ff4100 90.00%,#ff3d00 91.00%,#ff3800 92.00%,#ff3300 93.00%,#ff2900 94.00%,#ff2000 95.00%,#ff1800 96.00%,#ff1100 97.00%,#ff0a00 98.00%,#ff0500 99.00%,#ff0000 100.00%);"></div>
<div class="t" style="left:21.88px;top:672px;font-size:14px;line-height:14px;letter-spacing:0.341px;color:#000;">Selected &quot;16.93 MPI Rank 1&quot;</div>
<div style="left:970px;top:668px;width:25px;height:25px;background:#fff;"></div>
<div style="left:970px;top:668px;width:24px;height:24px;background:#808080;"></div>
<div style="left:971px;top:669px;width:23px;height:23px;background:#fff;"></div>
<div style="left:972px;top:670px;width:22px;height:22px;background:#d4d0c8;"></div>
<div style="left:972px;top:690px;width:8px;height:1px;background:#000;"></div>
<div style="left:993px;top:669px;width:1px;height:9px;background:#555;"></div>
<div style="left:979px;top:674px;width:10px;height:5px;background:#000070;border-radius:3px 3px 0 0;"></div>
<div style="left:978px;top:679px;width:2px;height:6px;background:#70f000;"></div>
<svg style="position:absolute;left:980px;top:678px" width="15" height="15" viewBox="0 0 15 15"><rect width="15" height="15" fill="#fff"/><path d="M14 3 L3 14 M14 8 L8 14 M14 12 L12 14" stroke="#888" stroke-width="1"/></svg>
</body></html>
